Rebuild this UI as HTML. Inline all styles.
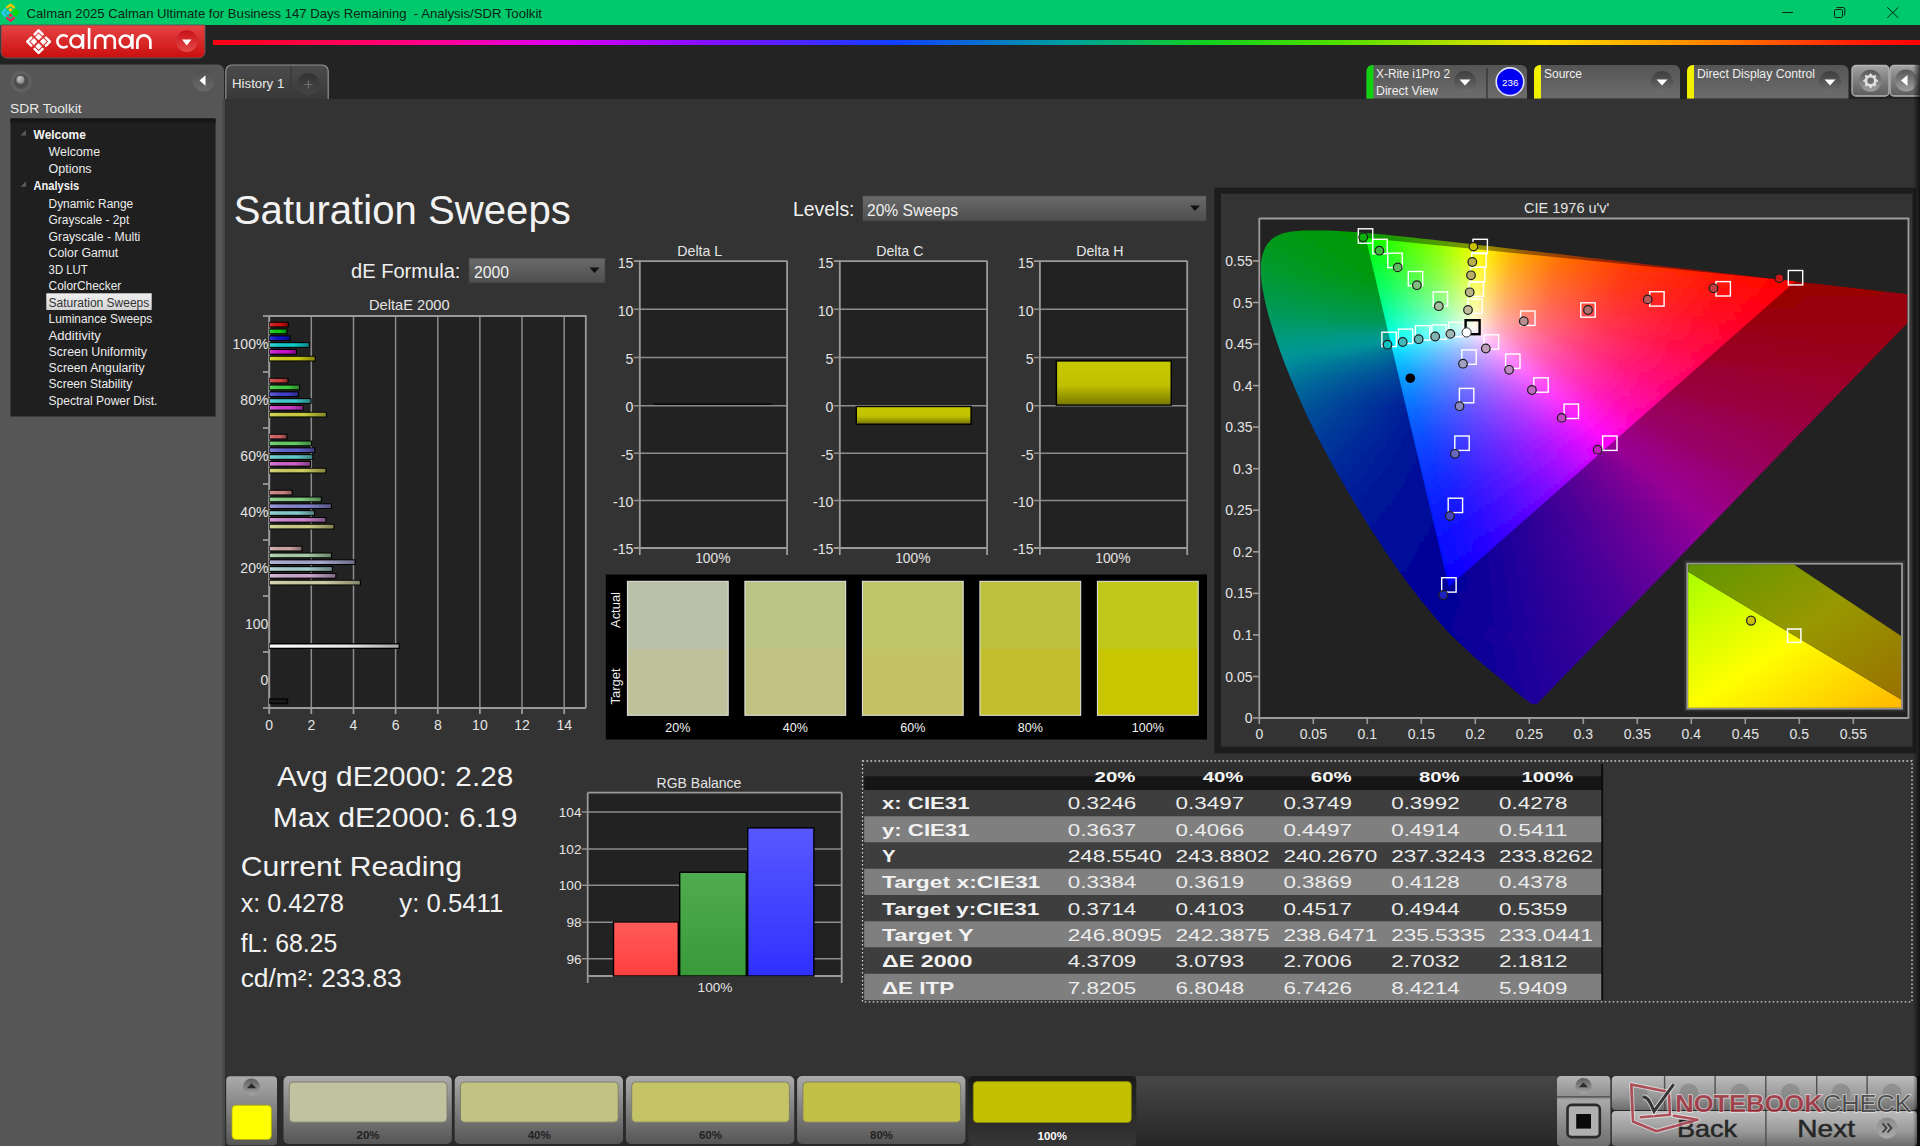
<!DOCTYPE html>
<html><head><meta charset="utf-8"><title>Calman</title>
<style>
*{margin:0;padding:0}
html,body{width:1920px;height:1146px;overflow:hidden;background:#232323}
svg{display:block;font-family:"Liberation Sans",sans-serif}
</style></head><body>
<svg width="1920" height="1146" viewBox="0 0 1920 1146">
<defs><linearGradient id="gRed" x1="0" y1="0" x2="0" y2="1"><stop offset="0" stop-color="#e54444"/><stop offset="1" stop-color="#cb0e0e"/></linearGradient><linearGradient id="gRedBtn" x1="0" y1="0" x2="0" y2="1"><stop offset="0" stop-color="#c81018"/><stop offset="1" stop-color="#e44a4a"/></linearGradient><linearGradient id="gRainbow" x1="0" y1="0" x2="1" y2="0"><stop offset="0" stop-color="#ff0010"/><stop offset="0.13" stop-color="#ff0090"/><stop offset="0.2" stop-color="#e000f0"/><stop offset="0.3" stop-color="#7a10ff"/><stop offset="0.4" stop-color="#1040ff"/><stop offset="0.5" stop-color="#00a0a0"/><stop offset="0.58" stop-color="#10d020"/><stop offset="0.66" stop-color="#50e000"/><stop offset="0.78" stop-color="#ffe000"/><stop offset="0.88" stop-color="#ff8000"/><stop offset="0.96" stop-color="#ff2000"/><stop offset="1" stop-color="#ff0000"/></linearGradient><radialGradient id="gKnobRing" cx="0.5" cy="0.5" r="0.5"><stop offset="0.55" stop-color="#4c4c4c"/><stop offset="0.8" stop-color="#646464"/><stop offset="1" stop-color="#5a5a5a"/></radialGradient><radialGradient id="gBall" cx="0.4" cy="0.35" r="0.6"><stop offset="0" stop-color="#c4c4c4"/><stop offset="1" stop-color="#8a8a8a"/></radialGradient><linearGradient id="gCircBtn" x1="0" y1="0" x2="0" y2="1"><stop offset="0" stop-color="#4e4e4e"/><stop offset="1" stop-color="#6a6a6a"/></linearGradient><linearGradient id="gTreeTop" x1="0" y1="0" x2="0" y2="1"><stop offset="0" stop-color="#111"/><stop offset="1" stop-color="#1f1f1f"/></linearGradient><linearGradient id="gSel" x1="0" y1="0" x2="0" y2="1"><stop offset="0" stop-color="#f0f0f0"/><stop offset="1" stop-color="#d4d4d4"/></linearGradient><linearGradient id="gTab" x1="0" y1="0" x2="0" y2="1"><stop offset="0" stop-color="#4c4c4c"/><stop offset="1" stop-color="#383838"/></linearGradient><linearGradient id="gPlus" x1="0" y1="0" x2="0" y2="1"><stop offset="0" stop-color="#333"/><stop offset="1" stop-color="#454545"/></linearGradient><linearGradient id="gCtl" x1="0" y1="0" x2="0" y2="1"><stop offset="0" stop-color="#555"/><stop offset="1" stop-color="#6c6c6c"/></linearGradient><linearGradient id="gDrop" x1="0" y1="0" x2="0" y2="1"><stop offset="0" stop-color="#3e3e3e"/><stop offset="1" stop-color="#6e6e6e"/></linearGradient><linearGradient id="gSq" x1="0" y1="0" x2="0" y2="1"><stop offset="0" stop-color="#a4a4a4"/><stop offset="0.45" stop-color="#808080"/><stop offset="1" stop-color="#5c5c5c"/></linearGradient><linearGradient id="gSqC" x1="0" y1="0" x2="0" y2="1"><stop offset="0" stop-color="#575757"/><stop offset="1" stop-color="#a0a0a0"/></linearGradient><linearGradient id="gDD" x1="0" y1="0" x2="0" y2="1"><stop offset="0" stop-color="#6a6a6a"/><stop offset="1" stop-color="#4e4e4e"/></linearGradient><linearGradient id="gBarH" x1="0" y1="0" x2="1" y2="0"><stop offset="0" stop-color="#fff" stop-opacity="0.18"/><stop offset="0.6" stop-color="#000" stop-opacity="0"/><stop offset="1" stop-color="#000" stop-opacity="0.35"/></linearGradient><linearGradient id="gWhiteBar" x1="0" y1="0" x2="1" y2="0"><stop offset="0" stop-color="#fff"/><stop offset="0.6" stop-color="#e8e8e8"/><stop offset="1" stop-color="#a8a8a8"/></linearGradient><linearGradient id="gYBar" x1="0" y1="0" x2="0" y2="1"><stop offset="0" stop-color="#c8c800"/><stop offset="0.55" stop-color="#c0c000"/><stop offset="1" stop-color="#7a7a00"/></linearGradient><linearGradient id="gRb" x1="0" y1="0" x2="0" y2="1"><stop offset="0" stop-color="#ff5a5a"/><stop offset="1" stop-color="#ff4040"/></linearGradient><linearGradient id="gGb" x1="0" y1="0" x2="0" y2="1"><stop offset="0" stop-color="#50ac50"/><stop offset="1" stop-color="#389a38"/></linearGradient><linearGradient id="gBb" x1="0" y1="0" x2="0" y2="1"><stop offset="0" stop-color="#5858ff"/><stop offset="1" stop-color="#3030ff"/></linearGradient><linearGradient id="o0" x1="0" x2="1"><stop offset="0.000" stop-color="#009913"/><stop offset="0.667" stop-color="#049900"/><stop offset="1.000" stop-color="#2e9900"/></linearGradient><linearGradient id="o1" x1="0" x2="1"><stop offset="0.000" stop-color="#009919"/><stop offset="0.531" stop-color="#059900"/><stop offset="0.918" stop-color="#5c9900"/><stop offset="1.000" stop-color="#749900"/></linearGradient><linearGradient id="o2" x1="0" x2="1"><stop offset="0.000" stop-color="#00991d"/><stop offset="0.460" stop-color="#069900"/><stop offset="0.746" stop-color="#5f9900"/><stop offset="0.889" stop-color="#999600"/><stop offset="1.000" stop-color="#996f00"/></linearGradient><linearGradient id="o3" x1="0" x2="1"><stop offset="0.000" stop-color="#009922"/><stop offset="0.403" stop-color="#059900"/><stop offset="0.623" stop-color="#5e9900"/><stop offset="0.740" stop-color="#999300"/><stop offset="0.896" stop-color="#995700"/><stop offset="1.000" stop-color="#994200"/></linearGradient><linearGradient id="o4" x1="0" x2="1"><stop offset="0.000" stop-color="#009926"/><stop offset="0.371" stop-color="#059900"/><stop offset="0.551" stop-color="#609900"/><stop offset="0.640" stop-color="#999300"/><stop offset="0.764" stop-color="#995800"/><stop offset="1.000" stop-color="#992a00"/></linearGradient><linearGradient id="o5" x1="0" x2="1"><stop offset="0.000" stop-color="#00992a"/><stop offset="0.340" stop-color="#059900"/><stop offset="0.476" stop-color="#5b9900"/><stop offset="0.553" stop-color="#999400"/><stop offset="0.650" stop-color="#995900"/><stop offset="0.835" stop-color="#992b00"/><stop offset="1.000" stop-color="#991800"/></linearGradient><linearGradient id="o6" x1="0" x2="1"><stop offset="0.000" stop-color="#00992f"/><stop offset="0.308" stop-color="#029900"/><stop offset="0.419" stop-color="#579900"/><stop offset="0.479" stop-color="#969900"/><stop offset="0.564" stop-color="#995900"/><stop offset="0.718" stop-color="#992a00"/><stop offset="1.000" stop-color="#990d00"/></linearGradient><linearGradient id="o7" x1="0" x2="1"><stop offset="0.000" stop-color="#009934"/><stop offset="0.292" stop-color="#049900"/><stop offset="0.385" stop-color="#5b9900"/><stop offset="0.431" stop-color="#979900"/><stop offset="0.492" stop-color="#995e00"/><stop offset="0.608" stop-color="#992e00"/><stop offset="0.877" stop-color="#990b00"/><stop offset="1.000" stop-color="#990500"/></linearGradient><linearGradient id="o8" x1="0" x2="1"><stop offset="0.000" stop-color="#009938"/><stop offset="0.224" stop-color="#00990b"/><stop offset="0.280" stop-color="#069900"/><stop offset="0.357" stop-color="#619900"/><stop offset="0.392" stop-color="#999900"/><stop offset="0.441" stop-color="#995e00"/><stop offset="0.531" stop-color="#992f00"/><stop offset="0.741" stop-color="#990d00"/><stop offset="1.000" stop-color="#990000"/></linearGradient><linearGradient id="o9" x1="0" x2="1"><stop offset="0.000" stop-color="#00993e"/><stop offset="0.199" stop-color="#009913"/><stop offset="0.263" stop-color="#009900"/><stop offset="0.327" stop-color="#5c9900"/><stop offset="0.359" stop-color="#999700"/><stop offset="0.397" stop-color="#995f00"/><stop offset="0.474" stop-color="#992e00"/><stop offset="0.654" stop-color="#990b00"/><stop offset="1.000" stop-color="#990003"/></linearGradient><linearGradient id="o10" x1="0" x2="1"><stop offset="0.000" stop-color="#009943"/><stop offset="0.179" stop-color="#00991c"/><stop offset="0.256" stop-color="#059900"/><stop offset="0.304" stop-color="#599900"/><stop offset="0.327" stop-color="#929900"/><stop offset="0.357" stop-color="#996500"/><stop offset="0.411" stop-color="#993500"/><stop offset="0.530" stop-color="#991100"/><stop offset="0.833" stop-color="#990002"/><stop offset="1.000" stop-color="#990006"/></linearGradient><linearGradient id="o11" x1="0" x2="1"><stop offset="0.000" stop-color="#009948"/><stop offset="0.179" stop-color="#009924"/><stop offset="0.262" stop-color="#029900"/><stop offset="0.304" stop-color="#559900"/><stop offset="0.327" stop-color="#989900"/><stop offset="0.357" stop-color="#995c00"/><stop offset="0.411" stop-color="#992d00"/><stop offset="0.536" stop-color="#990b00"/><stop offset="0.851" stop-color="#990005"/><stop offset="1.000" stop-color="#990008"/></linearGradient><linearGradient id="o12" x1="0" x2="1"><stop offset="0.000" stop-color="#00994e"/><stop offset="0.179" stop-color="#00992d"/><stop offset="0.268" stop-color="#009900"/><stop offset="0.298" stop-color="#3f9900"/><stop offset="0.327" stop-color="#999200"/><stop offset="0.351" stop-color="#995a00"/><stop offset="0.399" stop-color="#992a00"/><stop offset="0.512" stop-color="#990900"/><stop offset="0.827" stop-color="#990007"/><stop offset="1.000" stop-color="#99000a"/></linearGradient><linearGradient id="o13" x1="0" x2="1"><stop offset="0.000" stop-color="#009954"/><stop offset="0.186" stop-color="#009935"/><stop offset="0.281" stop-color="#039900"/><stop offset="0.305" stop-color="#489900"/><stop offset="0.323" stop-color="#919900"/><stop offset="0.341" stop-color="#996300"/><stop offset="0.371" stop-color="#993500"/><stop offset="0.437" stop-color="#991200"/><stop offset="0.605" stop-color="#990002"/><stop offset="1.000" stop-color="#99000b"/></linearGradient><linearGradient id="o14" x1="0" x2="1"><stop offset="0.000" stop-color="#00995a"/><stop offset="0.192" stop-color="#009940"/><stop offset="0.263" stop-color="#009917"/><stop offset="0.287" stop-color="#009900"/><stop offset="0.299" stop-color="#239900"/><stop offset="0.323" stop-color="#999600"/><stop offset="0.335" stop-color="#996200"/><stop offset="0.359" stop-color="#993300"/><stop offset="0.413" stop-color="#990f00"/><stop offset="0.545" stop-color="#990003"/><stop offset="1.000" stop-color="#99000d"/></linearGradient><linearGradient id="o15" x1="0" x2="1"><stop offset="0.000" stop-color="#009961"/><stop offset="0.210" stop-color="#009949"/><stop offset="0.269" stop-color="#009926"/><stop offset="0.299" stop-color="#069900"/><stop offset="0.311" stop-color="#4e9900"/><stop offset="0.317" stop-color="#7d9900"/><stop offset="0.323" stop-color="#998100"/><stop offset="0.335" stop-color="#994900"/><stop offset="0.359" stop-color="#991f00"/><stop offset="0.419" stop-color="#990300"/><stop offset="1.000" stop-color="#99000f"/></linearGradient><linearGradient id="o16" x1="0" x2="1"><stop offset="0.000" stop-color="#009968"/><stop offset="0.236" stop-color="#009955"/><stop offset="0.285" stop-color="#009937"/><stop offset="0.309" stop-color="#009900"/><stop offset="0.315" stop-color="#429900"/><stop offset="0.321" stop-color="#998c00"/><stop offset="0.327" stop-color="#994d00"/><stop offset="0.333" stop-color="#993000"/><stop offset="0.352" stop-color="#990e00"/><stop offset="0.394" stop-color="#990003"/><stop offset="0.867" stop-color="#990010"/><stop offset="1.000" stop-color="#990011"/></linearGradient><linearGradient id="o17" x1="0" x2="1"><stop offset="0.000" stop-color="#00996f"/><stop offset="0.305" stop-color="#009974"/><stop offset="0.311" stop-color="#009978"/><stop offset="0.317" stop-color="#008f99"/><stop offset="0.323" stop-color="#99001b"/><stop offset="0.512" stop-color="#990013"/><stop offset="1.000" stop-color="#990013"/></linearGradient><linearGradient id="o18" x1="0" x2="1"><stop offset="0.000" stop-color="#009977"/><stop offset="0.222" stop-color="#00998a"/><stop offset="0.259" stop-color="#009699"/><stop offset="0.290" stop-color="#006d99"/><stop offset="0.302" stop-color="#004a99"/><stop offset="0.315" stop-color="#000e99"/><stop offset="0.321" stop-color="#1d0099"/><stop offset="0.327" stop-color="#6e0099"/><stop offset="0.333" stop-color="#99007e"/><stop offset="0.340" stop-color="#99005c"/><stop offset="0.358" stop-color="#990038"/><stop offset="0.420" stop-color="#990021"/><stop offset="1.000" stop-color="#990015"/></linearGradient><linearGradient id="o19" x1="0" x2="1"><stop offset="0.000" stop-color="#00997f"/><stop offset="0.188" stop-color="#009997"/><stop offset="0.256" stop-color="#007499"/><stop offset="0.294" stop-color="#003f99"/><stop offset="0.319" stop-color="#000199"/><stop offset="0.325" stop-color="#1d0099"/><stop offset="0.344" stop-color="#960099"/><stop offset="0.356" stop-color="#990069"/><stop offset="0.381" stop-color="#990044"/><stop offset="0.456" stop-color="#990028"/><stop offset="0.919" stop-color="#990017"/><stop offset="1.000" stop-color="#990017"/></linearGradient><linearGradient id="o20" x1="0" x2="1"><stop offset="0.000" stop-color="#009988"/><stop offset="0.152" stop-color="#009299"/><stop offset="0.241" stop-color="#006899"/><stop offset="0.291" stop-color="#002c99"/><stop offset="0.316" stop-color="#000199"/><stop offset="0.329" stop-color="#2b0099"/><stop offset="0.354" stop-color="#970099"/><stop offset="0.373" stop-color="#990069"/><stop offset="0.411" stop-color="#990043"/><stop offset="0.525" stop-color="#990028"/><stop offset="1.000" stop-color="#990019"/></linearGradient><linearGradient id="o21" x1="0" x2="1"><stop offset="0.000" stop-color="#009991"/><stop offset="0.115" stop-color="#008d99"/><stop offset="0.224" stop-color="#006199"/><stop offset="0.288" stop-color="#002399"/><stop offset="0.321" stop-color="#050099"/><stop offset="0.365" stop-color="#920099"/><stop offset="0.397" stop-color="#990063"/><stop offset="0.462" stop-color="#99003d"/><stop offset="0.667" stop-color="#990023"/><stop offset="1.000" stop-color="#99001b"/></linearGradient><linearGradient id="o22" x1="0" x2="1"><stop offset="0.000" stop-color="#009899"/><stop offset="0.175" stop-color="#006d99"/><stop offset="0.266" stop-color="#003399"/><stop offset="0.318" stop-color="#000099"/><stop offset="0.357" stop-color="#5b0099"/><stop offset="0.383" stop-color="#990097"/><stop offset="0.416" stop-color="#990067"/><stop offset="0.487" stop-color="#990041"/><stop offset="0.708" stop-color="#990026"/><stop offset="1.000" stop-color="#99001d"/></linearGradient><linearGradient id="o23" x1="0" x2="1"><stop offset="0.000" stop-color="#008f99"/><stop offset="0.178" stop-color="#006099"/><stop offset="0.276" stop-color="#002199"/><stop offset="0.322" stop-color="#030099"/><stop offset="0.395" stop-color="#970099"/><stop offset="0.441" stop-color="#990063"/><stop offset="0.539" stop-color="#99003d"/><stop offset="0.855" stop-color="#990023"/><stop offset="1.000" stop-color="#990020"/></linearGradient><linearGradient id="o24" x1="0" x2="1"><stop offset="0.000" stop-color="#008699"/><stop offset="0.180" stop-color="#005499"/><stop offset="0.320" stop-color="#020099"/><stop offset="0.407" stop-color="#970099"/><stop offset="0.460" stop-color="#990064"/><stop offset="0.573" stop-color="#99003e"/><stop offset="0.940" stop-color="#990024"/><stop offset="1.000" stop-color="#990022"/></linearGradient><linearGradient id="o25" x1="0" x2="1"><stop offset="0.000" stop-color="#007d99"/><stop offset="0.182" stop-color="#004a99"/><stop offset="0.318" stop-color="#000099"/><stop offset="0.426" stop-color="#990094"/><stop offset="0.486" stop-color="#990062"/><stop offset="0.622" stop-color="#99003d"/><stop offset="1.000" stop-color="#990025"/></linearGradient><linearGradient id="o26" x1="0" x2="1"><stop offset="0.000" stop-color="#007599"/><stop offset="0.185" stop-color="#004199"/><stop offset="0.315" stop-color="#000099"/><stop offset="0.438" stop-color="#990095"/><stop offset="0.507" stop-color="#990062"/><stop offset="0.664" stop-color="#99003c"/><stop offset="1.000" stop-color="#990027"/></linearGradient><linearGradient id="o27" x1="0" x2="1"><stop offset="0.000" stop-color="#006e99"/><stop offset="0.194" stop-color="#003699"/><stop offset="0.319" stop-color="#020099"/><stop offset="0.451" stop-color="#990097"/><stop offset="0.521" stop-color="#990067"/><stop offset="0.681" stop-color="#990040"/><stop offset="1.000" stop-color="#99002a"/></linearGradient><linearGradient id="o28" x1="0" x2="1"><stop offset="0.000" stop-color="#006799"/><stop offset="0.206" stop-color="#002c99"/><stop offset="0.319" stop-color="#000099"/><stop offset="0.468" stop-color="#990097"/><stop offset="0.546" stop-color="#990067"/><stop offset="0.723" stop-color="#990040"/><stop offset="1.000" stop-color="#99002d"/></linearGradient><linearGradient id="o29" x1="0" x2="1"><stop offset="0.000" stop-color="#006199"/><stop offset="0.214" stop-color="#002399"/><stop offset="0.321" stop-color="#050099"/><stop offset="0.479" stop-color="#990099"/><stop offset="0.564" stop-color="#990068"/><stop offset="0.757" stop-color="#990040"/><stop offset="1.000" stop-color="#99002f"/></linearGradient><linearGradient id="o30" x1="0" x2="1"><stop offset="0.000" stop-color="#005b99"/><stop offset="0.234" stop-color="#001899"/><stop offset="0.321" stop-color="#040099"/><stop offset="0.504" stop-color="#990093"/><stop offset="0.606" stop-color="#990063"/><stop offset="0.839" stop-color="#99003d"/><stop offset="1.000" stop-color="#990033"/></linearGradient><linearGradient id="o31" x1="0" x2="1"><stop offset="0.000" stop-color="#005599"/><stop offset="0.319" stop-color="#030099"/><stop offset="0.519" stop-color="#990094"/><stop offset="0.630" stop-color="#990063"/><stop offset="0.889" stop-color="#99003d"/><stop offset="1.000" stop-color="#990036"/></linearGradient><linearGradient id="o32" x1="0" x2="1"><stop offset="0.000" stop-color="#005099"/><stop offset="0.316" stop-color="#020099"/><stop offset="0.534" stop-color="#990094"/><stop offset="0.654" stop-color="#990064"/><stop offset="0.932" stop-color="#99003d"/><stop offset="1.000" stop-color="#990039"/></linearGradient><linearGradient id="o33" x1="0" x2="1"><stop offset="0.000" stop-color="#004b99"/><stop offset="0.321" stop-color="#050099"/><stop offset="0.550" stop-color="#990096"/><stop offset="0.679" stop-color="#990064"/><stop offset="0.977" stop-color="#99003e"/><stop offset="1.000" stop-color="#99003c"/></linearGradient><linearGradient id="o34" x1="0" x2="1"><stop offset="0.000" stop-color="#004699"/><stop offset="0.318" stop-color="#040099"/><stop offset="0.566" stop-color="#990096"/><stop offset="0.705" stop-color="#990065"/><stop offset="1.000" stop-color="#990040"/></linearGradient><linearGradient id="o35" x1="0" x2="1"><stop offset="0.000" stop-color="#004199"/><stop offset="0.315" stop-color="#030099"/><stop offset="0.583" stop-color="#990096"/><stop offset="0.732" stop-color="#990065"/><stop offset="1.000" stop-color="#990043"/></linearGradient><linearGradient id="o36" x1="0" x2="1"><stop offset="0.000" stop-color="#003d99"/><stop offset="0.315" stop-color="#030099"/><stop offset="0.605" stop-color="#990097"/><stop offset="0.766" stop-color="#990065"/><stop offset="1.000" stop-color="#990047"/></linearGradient><linearGradient id="o37" x1="0" x2="1"><stop offset="0.000" stop-color="#003999"/><stop offset="0.311" stop-color="#020099"/><stop offset="0.623" stop-color="#990097"/><stop offset="0.795" stop-color="#990065"/><stop offset="1.000" stop-color="#99004b"/></linearGradient><linearGradient id="o38" x1="0" x2="1"><stop offset="0.000" stop-color="#003599"/><stop offset="0.308" stop-color="#020099"/><stop offset="0.650" stop-color="#990093"/><stop offset="0.842" stop-color="#990062"/><stop offset="1.000" stop-color="#99004f"/></linearGradient><linearGradient id="o39" x1="0" x2="1"><stop offset="0.000" stop-color="#003299"/><stop offset="0.314" stop-color="#040099"/><stop offset="0.669" stop-color="#990094"/><stop offset="0.873" stop-color="#990063"/><stop offset="1.000" stop-color="#990053"/></linearGradient><linearGradient id="o40" x1="0" x2="1"><stop offset="0.000" stop-color="#002e99"/><stop offset="0.313" stop-color="#050099"/><stop offset="0.696" stop-color="#990093"/><stop offset="0.922" stop-color="#990061"/><stop offset="1.000" stop-color="#990058"/></linearGradient><linearGradient id="o41" x1="0" x2="1"><stop offset="0.000" stop-color="#002b99"/><stop offset="0.310" stop-color="#040099"/><stop offset="0.717" stop-color="#990094"/><stop offset="0.956" stop-color="#990062"/><stop offset="1.000" stop-color="#99005c"/></linearGradient><linearGradient id="o42" x1="0" x2="1"><stop offset="0.000" stop-color="#002899"/><stop offset="0.306" stop-color="#040099"/><stop offset="0.739" stop-color="#990094"/><stop offset="0.991" stop-color="#990062"/><stop offset="1.000" stop-color="#990061"/></linearGradient><linearGradient id="o43" x1="0" x2="1"><stop offset="0.000" stop-color="#002499"/><stop offset="0.315" stop-color="#060099"/><stop offset="0.769" stop-color="#990093"/><stop offset="1.000" stop-color="#990066"/></linearGradient><linearGradient id="o44" x1="0" x2="1"><stop offset="0.000" stop-color="#002299"/><stop offset="0.311" stop-color="#060099"/><stop offset="0.792" stop-color="#990094"/><stop offset="1.000" stop-color="#99006b"/></linearGradient><linearGradient id="o45" x1="0" x2="1"><stop offset="0.000" stop-color="#001f99"/><stop offset="0.308" stop-color="#060099"/><stop offset="0.808" stop-color="#990096"/><stop offset="1.000" stop-color="#990070"/></linearGradient><linearGradient id="o46" x1="0" x2="1"><stop offset="0.000" stop-color="#001d99"/><stop offset="0.307" stop-color="#050099"/><stop offset="0.851" stop-color="#990093"/><stop offset="1.000" stop-color="#990077"/></linearGradient><linearGradient id="o47" x1="0" x2="1"><stop offset="0.000" stop-color="#001a99"/><stop offset="0.303" stop-color="#060099"/><stop offset="0.869" stop-color="#990095"/><stop offset="1.000" stop-color="#99007c"/></linearGradient><linearGradient id="o48" x1="0" x2="1"><stop offset="0.000" stop-color="#001899"/><stop offset="0.299" stop-color="#050099"/><stop offset="0.907" stop-color="#990093"/><stop offset="1.000" stop-color="#990081"/></linearGradient><linearGradient id="o49" x1="0" x2="1"><stop offset="0.000" stop-color="#001699"/><stop offset="0.298" stop-color="#050099"/><stop offset="0.936" stop-color="#990095"/><stop offset="1.000" stop-color="#990089"/></linearGradient><linearGradient id="o50" x1="0" x2="1"><stop offset="0.000" stop-color="#001499"/><stop offset="0.293" stop-color="#050099"/><stop offset="0.967" stop-color="#990095"/><stop offset="1.000" stop-color="#99008f"/></linearGradient><linearGradient id="o51" x1="0" x2="1"><stop offset="0.000" stop-color="#001299"/><stop offset="0.292" stop-color="#050099"/><stop offset="1.000" stop-color="#990097"/></linearGradient><linearGradient id="o52" x1="0" x2="1"><stop offset="0.000" stop-color="#001099"/><stop offset="0.287" stop-color="#050099"/><stop offset="1.000" stop-color="#950099"/></linearGradient><linearGradient id="o53" x1="0" x2="1"><stop offset="0.000" stop-color="#000e99"/><stop offset="0.282" stop-color="#050099"/><stop offset="1.000" stop-color="#8f0099"/></linearGradient><linearGradient id="o54" x1="0" x2="1"><stop offset="0.000" stop-color="#000d99"/><stop offset="0.280" stop-color="#050099"/><stop offset="1.000" stop-color="#870099"/></linearGradient><linearGradient id="o55" x1="0" x2="1"><stop offset="0.000" stop-color="#000b99"/><stop offset="0.287" stop-color="#070099"/><stop offset="1.000" stop-color="#820099"/></linearGradient><linearGradient id="o56" x1="0" x2="1"><stop offset="0.000" stop-color="#000a99"/><stop offset="0.286" stop-color="#070099"/><stop offset="1.000" stop-color="#7b0099"/></linearGradient><linearGradient id="o57" x1="0" x2="1"><stop offset="0.000" stop-color="#000999"/><stop offset="0.280" stop-color="#070099"/><stop offset="1.000" stop-color="#760099"/></linearGradient><linearGradient id="o58" x1="0" x2="1"><stop offset="0.000" stop-color="#000799"/><stop offset="0.278" stop-color="#070099"/><stop offset="1.000" stop-color="#6f0099"/></linearGradient><linearGradient id="o59" x1="0" x2="1"><stop offset="0.000" stop-color="#000699"/><stop offset="0.257" stop-color="#060099"/><stop offset="1.000" stop-color="#6b0099"/></linearGradient><linearGradient id="o60" x1="0" x2="1"><stop offset="0.000" stop-color="#000599"/><stop offset="0.265" stop-color="#070099"/><stop offset="1.000" stop-color="#670099"/></linearGradient><linearGradient id="o61" x1="0" x2="1"><stop offset="0.000" stop-color="#000499"/><stop offset="0.262" stop-color="#080099"/><stop offset="1.000" stop-color="#610099"/></linearGradient><linearGradient id="o62" x1="0" x2="1"><stop offset="0.000" stop-color="#000399"/><stop offset="0.258" stop-color="#080099"/><stop offset="1.000" stop-color="#5c0099"/></linearGradient><linearGradient id="o63" x1="0" x2="1"><stop offset="0.000" stop-color="#000399"/><stop offset="0.250" stop-color="#080099"/><stop offset="1.000" stop-color="#590099"/></linearGradient><linearGradient id="o64" x1="0" x2="1"><stop offset="0.000" stop-color="#000299"/><stop offset="0.246" stop-color="#090099"/><stop offset="1.000" stop-color="#540099"/></linearGradient><linearGradient id="o65" x1="0" x2="1"><stop offset="0.000" stop-color="#000199"/><stop offset="0.278" stop-color="#0c0099"/><stop offset="1.000" stop-color="#4f0099"/></linearGradient><linearGradient id="o66" x1="0" x2="1"><stop offset="0.000" stop-color="#000199"/><stop offset="0.308" stop-color="#100099"/><stop offset="1.000" stop-color="#4c0099"/></linearGradient><linearGradient id="o67" x1="0" x2="1"><stop offset="0.000" stop-color="#000099"/><stop offset="0.429" stop-color="#1a0099"/><stop offset="1.000" stop-color="#480099"/></linearGradient><linearGradient id="o68" x1="0" x2="1"><stop offset="0.000" stop-color="#000099"/><stop offset="1.000" stop-color="#440099"/></linearGradient><linearGradient id="o69" x1="0" x2="1"><stop offset="0.000" stop-color="#000099"/><stop offset="1.000" stop-color="#410099"/></linearGradient><linearGradient id="o70" x1="0" x2="1"><stop offset="0.000" stop-color="#000099"/><stop offset="1.000" stop-color="#3d0099"/></linearGradient><linearGradient id="o71" x1="0" x2="1"><stop offset="0.000" stop-color="#030099"/><stop offset="1.000" stop-color="#3a0099"/></linearGradient><linearGradient id="o72" x1="0" x2="1"><stop offset="0.000" stop-color="#050099"/><stop offset="1.000" stop-color="#370099"/></linearGradient><linearGradient id="o73" x1="0" x2="1"><stop offset="0.000" stop-color="#070099"/><stop offset="1.000" stop-color="#340099"/></linearGradient><linearGradient id="o74" x1="0" x2="1"><stop offset="0.000" stop-color="#0a0099"/><stop offset="1.000" stop-color="#310099"/></linearGradient><linearGradient id="o75" x1="0" x2="1"><stop offset="0.000" stop-color="#0c0099"/><stop offset="1.000" stop-color="#2e0099"/></linearGradient><linearGradient id="o76" x1="0" x2="1"><stop offset="0.000" stop-color="#0e0099"/><stop offset="1.000" stop-color="#2b0099"/></linearGradient><linearGradient id="o77" x1="0" x2="1"><stop offset="0.000" stop-color="#100099"/><stop offset="1.000" stop-color="#290099"/></linearGradient><linearGradient id="o78" x1="0" x2="1"><stop offset="0.000" stop-color="#130099"/><stop offset="1.000" stop-color="#270099"/></linearGradient><linearGradient id="o79" x1="0" x2="1"><stop offset="0.000" stop-color="#150099"/><stop offset="1.000" stop-color="#240099"/></linearGradient><linearGradient id="o80" x1="0" x2="1"><stop offset="0.000" stop-color="#170099"/><stop offset="1.000" stop-color="#210099"/></linearGradient><linearGradient id="n0" x1="0" x2="1"><stop offset="0.000" stop-color="#00ff00"/><stop offset="0.357" stop-color="#11ff00"/><stop offset="1.000" stop-color="#43ff00"/></linearGradient><linearGradient id="n1" x1="0" x2="1"><stop offset="0.000" stop-color="#00ff01"/><stop offset="0.148" stop-color="#0aff00"/><stop offset="0.963" stop-color="#8eff00"/><stop offset="1.000" stop-color="#95ff00"/></linearGradient><linearGradient id="n2" x1="0" x2="1"><stop offset="0.000" stop-color="#00ff08"/><stop offset="0.100" stop-color="#09ff06"/><stop offset="0.625" stop-color="#87ff00"/><stop offset="1.000" stop-color="#fcff00"/></linearGradient><linearGradient id="n3" x1="0" x2="1"><stop offset="0.000" stop-color="#00ff10"/><stop offset="0.075" stop-color="#07ff0e"/><stop offset="0.472" stop-color="#86ff02"/><stop offset="0.755" stop-color="#fdff00"/><stop offset="0.981" stop-color="#ffaf00"/><stop offset="1.000" stop-color="#ffaa00"/></linearGradient><linearGradient id="n4" x1="0" x2="1"><stop offset="0.000" stop-color="#00ff17"/><stop offset="0.061" stop-color="#08ff15"/><stop offset="0.379" stop-color="#88ff0b"/><stop offset="0.606" stop-color="#fffd01"/><stop offset="0.773" stop-color="#ffb100"/><stop offset="1.000" stop-color="#ff7400"/></linearGradient><linearGradient id="n5" x1="0" x2="1"><stop offset="0.000" stop-color="#00ff1e"/><stop offset="0.051" stop-color="#08ff1d"/><stop offset="0.321" stop-color="#8bff13"/><stop offset="0.500" stop-color="#fcff0b"/><stop offset="0.654" stop-color="#ffae02"/><stop offset="0.872" stop-color="#ff6c00"/><stop offset="1.000" stop-color="#ff5300"/></linearGradient><linearGradient id="n6" x1="0" x2="1"><stop offset="0.000" stop-color="#00ff26"/><stop offset="0.044" stop-color="#08ff25"/><stop offset="0.264" stop-color="#85ff1d"/><stop offset="0.429" stop-color="#fffe15"/><stop offset="0.538" stop-color="#ffb60b"/><stop offset="0.714" stop-color="#ff7201"/><stop offset="1.000" stop-color="#ff3900"/></linearGradient><linearGradient id="n7" x1="0" x2="1"><stop offset="0.000" stop-color="#00ff2e"/><stop offset="0.038" stop-color="#08ff2d"/><stop offset="0.231" stop-color="#87ff26"/><stop offset="0.365" stop-color="#fbff20"/><stop offset="0.481" stop-color="#ffad11"/><stop offset="0.635" stop-color="#ff6d06"/><stop offset="0.885" stop-color="#ff3600"/><stop offset="1.000" stop-color="#ff2600"/></linearGradient><linearGradient id="n8" x1="0" x2="1"><stop offset="0.000" stop-color="#00ff36"/><stop offset="0.034" stop-color="#08ff35"/><stop offset="0.207" stop-color="#89ff2f"/><stop offset="0.328" stop-color="#ffff2b"/><stop offset="0.414" stop-color="#ffb51b"/><stop offset="0.543" stop-color="#ff740e"/><stop offset="0.759" stop-color="#ff3a02"/><stop offset="1.000" stop-color="#ff1800"/></linearGradient><linearGradient id="n9" x1="0" x2="1"><stop offset="0.000" stop-color="#00ff3e"/><stop offset="0.031" stop-color="#09ff3d"/><stop offset="0.186" stop-color="#8cff39"/><stop offset="0.295" stop-color="#fffa34"/><stop offset="0.372" stop-color="#ffb123"/><stop offset="0.488" stop-color="#ff7113"/><stop offset="0.682" stop-color="#ff3806"/><stop offset="1.000" stop-color="#ff0c00"/></linearGradient><linearGradient id="n10" x1="0" x2="1"><stop offset="0.000" stop-color="#00ff46"/><stop offset="0.028" stop-color="#09ff46"/><stop offset="0.162" stop-color="#86ff43"/><stop offset="0.261" stop-color="#ffff41"/><stop offset="0.331" stop-color="#ffb42c"/><stop offset="0.437" stop-color="#ff721a"/><stop offset="0.606" stop-color="#ff3a0b"/><stop offset="0.908" stop-color="#ff0b00"/><stop offset="1.000" stop-color="#ff0200"/></linearGradient><linearGradient id="n11" x1="0" x2="1"><stop offset="0.000" stop-color="#00ff4f"/><stop offset="0.028" stop-color="#09ff4f"/><stop offset="0.159" stop-color="#88ff4e"/><stop offset="0.255" stop-color="#fffb4b"/><stop offset="0.324" stop-color="#ffb034"/><stop offset="0.428" stop-color="#ff6f20"/><stop offset="0.600" stop-color="#ff360f"/><stop offset="0.903" stop-color="#ff0800"/><stop offset="1.000" stop-color="#ff0000"/></linearGradient><linearGradient id="n12" x1="0" x2="1"><stop offset="0.000" stop-color="#00ff58"/><stop offset="0.028" stop-color="#09ff58"/><stop offset="0.160" stop-color="#8bff58"/><stop offset="0.250" stop-color="#feff58"/><stop offset="0.319" stop-color="#ffb33e"/><stop offset="0.424" stop-color="#ff7027"/><stop offset="0.590" stop-color="#ff3814"/><stop offset="0.889" stop-color="#ff0904"/><stop offset="1.000" stop-color="#ff0000"/></linearGradient><linearGradient id="n13" x1="0" x2="1"><stop offset="0.000" stop-color="#00ff61"/><stop offset="0.028" stop-color="#09ff61"/><stop offset="0.160" stop-color="#8dff63"/><stop offset="0.250" stop-color="#fffc63"/><stop offset="0.319" stop-color="#ffaf46"/><stop offset="0.424" stop-color="#ff6e2d"/><stop offset="0.590" stop-color="#ff3618"/><stop offset="0.889" stop-color="#ff0806"/><stop offset="1.000" stop-color="#ff0003"/></linearGradient><linearGradient id="n14" x1="0" x2="1"><stop offset="0.000" stop-color="#00ff6a"/><stop offset="0.028" stop-color="#0aff6b"/><stop offset="0.154" stop-color="#87ff6e"/><stop offset="0.245" stop-color="#fdff71"/><stop offset="0.315" stop-color="#ffb251"/><stop offset="0.413" stop-color="#ff7236"/><stop offset="0.573" stop-color="#ff391e"/><stop offset="0.860" stop-color="#ff0a0b"/><stop offset="1.000" stop-color="#ff0005"/></linearGradient><linearGradient id="n15" x1="0" x2="1"><stop offset="0.000" stop-color="#00ff74"/><stop offset="0.028" stop-color="#0aff75"/><stop offset="0.156" stop-color="#89ff7a"/><stop offset="0.248" stop-color="#fffc7d"/><stop offset="0.312" stop-color="#ffb45c"/><stop offset="0.411" stop-color="#ff723e"/><stop offset="0.574" stop-color="#ff3924"/><stop offset="0.865" stop-color="#ff0a0e"/><stop offset="1.000" stop-color="#ff0008"/></linearGradient><linearGradient id="n16" x1="0" x2="1"><stop offset="0.000" stop-color="#00ff7e"/><stop offset="0.022" stop-color="#04ff7f"/><stop offset="0.151" stop-color="#83ff85"/><stop offset="0.245" stop-color="#fcff8b"/><stop offset="0.324" stop-color="#ffaa61"/><stop offset="0.432" stop-color="#ff6941"/><stop offset="0.604" stop-color="#ff3226"/><stop offset="0.921" stop-color="#ff040f"/><stop offset="1.000" stop-color="#ff000b"/></linearGradient><linearGradient id="n17" x1="0" x2="1"><stop offset="0.000" stop-color="#00ff88"/><stop offset="0.022" stop-color="#04ff89"/><stop offset="0.153" stop-color="#86ff91"/><stop offset="0.248" stop-color="#fffd98"/><stop offset="0.314" stop-color="#ffb370"/><stop offset="0.416" stop-color="#ff704c"/><stop offset="0.577" stop-color="#ff392f"/><stop offset="0.869" stop-color="#ff0915"/><stop offset="1.000" stop-color="#ff000f"/></linearGradient><linearGradient id="n18" x1="0" x2="1"><stop offset="0.000" stop-color="#00ff92"/><stop offset="0.022" stop-color="#04ff94"/><stop offset="0.154" stop-color="#88ff9e"/><stop offset="0.243" stop-color="#fbffa7"/><stop offset="0.324" stop-color="#ffa975"/><stop offset="0.426" stop-color="#ff6a51"/><stop offset="0.596" stop-color="#ff3331"/><stop offset="0.904" stop-color="#ff0517"/><stop offset="1.000" stop-color="#ff0012"/></linearGradient><linearGradient id="n19" x1="0" x2="1"><stop offset="0.000" stop-color="#00ff9d"/><stop offset="0.022" stop-color="#04ff9f"/><stop offset="0.149" stop-color="#82ffaa"/><stop offset="0.246" stop-color="#fffeb5"/><stop offset="0.313" stop-color="#ffb285"/><stop offset="0.410" stop-color="#ff725e"/><stop offset="0.567" stop-color="#ff3a3b"/><stop offset="0.851" stop-color="#ff0b1e"/><stop offset="1.000" stop-color="#ff0015"/></linearGradient><linearGradient id="n20" x1="0" x2="1"><stop offset="0.000" stop-color="#00ffa8"/><stop offset="0.023" stop-color="#05ffaa"/><stop offset="0.152" stop-color="#84ffb7"/><stop offset="0.242" stop-color="#faffc4"/><stop offset="0.326" stop-color="#ffa88a"/><stop offset="0.432" stop-color="#ff6860"/><stop offset="0.606" stop-color="#ff313b"/><stop offset="0.924" stop-color="#ff031d"/><stop offset="1.000" stop-color="#ff0018"/></linearGradient><linearGradient id="n21" x1="0" x2="1"><stop offset="0.000" stop-color="#00ffb3"/><stop offset="0.023" stop-color="#05ffb6"/><stop offset="0.154" stop-color="#87ffc5"/><stop offset="0.246" stop-color="#ffffd3"/><stop offset="0.308" stop-color="#ffb8a1"/><stop offset="0.400" stop-color="#ff7873"/><stop offset="0.554" stop-color="#ff3e4a"/><stop offset="0.823" stop-color="#ff0e28"/><stop offset="1.000" stop-color="#ff001c"/></linearGradient><linearGradient id="n22" x1="0" x2="1"><stop offset="0.000" stop-color="#00ffbf"/><stop offset="0.023" stop-color="#05ffc2"/><stop offset="0.148" stop-color="#80ffd2"/><stop offset="0.250" stop-color="#fffadf"/><stop offset="0.312" stop-color="#ffb4aa"/><stop offset="0.414" stop-color="#ff7177"/><stop offset="0.578" stop-color="#ff384c"/><stop offset="0.867" stop-color="#ff0929"/><stop offset="1.000" stop-color="#ff0020"/></linearGradient><linearGradient id="n23" x1="0" x2="1"><stop offset="0.000" stop-color="#00ffcb"/><stop offset="0.024" stop-color="#05ffce"/><stop offset="0.151" stop-color="#83ffe1"/><stop offset="0.246" stop-color="#fefff3"/><stop offset="0.317" stop-color="#ffafb3"/><stop offset="0.421" stop-color="#ff6e7e"/><stop offset="0.587" stop-color="#ff3651"/><stop offset="0.889" stop-color="#ff072c"/><stop offset="1.000" stop-color="#ff0024"/></linearGradient><linearGradient id="n24" x1="0" x2="1"><stop offset="0.000" stop-color="#00ffd7"/><stop offset="0.032" stop-color="#0affdc"/><stop offset="0.160" stop-color="#8bfff1"/><stop offset="0.248" stop-color="#fbfaff"/><stop offset="0.328" stop-color="#ffa7b9"/><stop offset="0.432" stop-color="#ff6883"/><stop offset="0.608" stop-color="#ff3154"/><stop offset="0.928" stop-color="#ff032c"/><stop offset="1.000" stop-color="#ff0027"/></linearGradient><linearGradient id="n25" x1="0" x2="1"><stop offset="0.000" stop-color="#00ffe4"/><stop offset="0.024" stop-color="#03ffe8"/><stop offset="0.154" stop-color="#85ffff"/><stop offset="0.268" stop-color="#ffe3fc"/><stop offset="0.341" stop-color="#ff9dbc"/><stop offset="0.455" stop-color="#ff5f84"/><stop offset="0.642" stop-color="#ff2a54"/><stop offset="0.967" stop-color="#ff002e"/><stop offset="1.000" stop-color="#ff002b"/></linearGradient><linearGradient id="n26" x1="0" x2="1"><stop offset="0.000" stop-color="#00fff1"/><stop offset="0.025" stop-color="#03fff5"/><stop offset="0.132" stop-color="#67f5ff"/><stop offset="0.281" stop-color="#ffd5fe"/><stop offset="0.364" stop-color="#ff8eba"/><stop offset="0.488" stop-color="#ff5382"/><stop offset="0.702" stop-color="#ff1f50"/><stop offset="1.000" stop-color="#ff002f"/></linearGradient><linearGradient id="n27" x1="0" x2="1"><stop offset="0.000" stop-color="#00ffff"/><stop offset="0.025" stop-color="#03fbff"/><stop offset="0.261" stop-color="#dbcdff"/><stop offset="0.294" stop-color="#fec6ff"/><stop offset="0.387" stop-color="#ff80b9"/><stop offset="0.529" stop-color="#ff457d"/><stop offset="0.773" stop-color="#ff144c"/><stop offset="1.000" stop-color="#ff0034"/></linearGradient><linearGradient id="n28" x1="0" x2="1"><stop offset="0.000" stop-color="#00f2ff"/><stop offset="0.026" stop-color="#03eeff"/><stop offset="0.274" stop-color="#dbbfff"/><stop offset="0.316" stop-color="#ffb2fa"/><stop offset="0.410" stop-color="#ff73b7"/><stop offset="0.564" stop-color="#ff3c7b"/><stop offset="0.829" stop-color="#ff0d4a"/><stop offset="1.000" stop-color="#ff0038"/></linearGradient><linearGradient id="n29" x1="0" x2="1"><stop offset="0.000" stop-color="#00e6ff"/><stop offset="0.035" stop-color="#0ae0ff"/><stop offset="0.296" stop-color="#e2b0ff"/><stop offset="0.330" stop-color="#ffa7fc"/><stop offset="0.426" stop-color="#ff6cba"/><stop offset="0.583" stop-color="#ff377e"/><stop offset="0.852" stop-color="#ff0b4d"/><stop offset="1.000" stop-color="#ff003d"/></linearGradient><linearGradient id="n30" x1="0" x2="1"><stop offset="0.000" stop-color="#00daff"/><stop offset="0.035" stop-color="#0ad4ff"/><stop offset="0.307" stop-color="#e1a3ff"/><stop offset="0.342" stop-color="#ff9cfe"/><stop offset="0.447" stop-color="#ff61b8"/><stop offset="0.614" stop-color="#ff2f7d"/><stop offset="0.904" stop-color="#ff054b"/><stop offset="1.000" stop-color="#ff0041"/></linearGradient><linearGradient id="n31" x1="0" x2="1"><stop offset="0.000" stop-color="#00cfff"/><stop offset="0.036" stop-color="#0acaff"/><stop offset="0.330" stop-color="#e896ff"/><stop offset="0.366" stop-color="#ff8bf9"/><stop offset="0.473" stop-color="#ff57b7"/><stop offset="0.652" stop-color="#ff277b"/><stop offset="0.955" stop-color="#ff004a"/><stop offset="1.000" stop-color="#ff0046"/></linearGradient><linearGradient id="n32" x1="0" x2="1"><stop offset="0.000" stop-color="#00c5ff"/><stop offset="0.036" stop-color="#09c0ff"/><stop offset="0.345" stop-color="#e78bff"/><stop offset="0.382" stop-color="#ff82fa"/><stop offset="0.500" stop-color="#ff4eb6"/><stop offset="0.691" stop-color="#ff207a"/><stop offset="0.991" stop-color="#ff004c"/><stop offset="1.000" stop-color="#ff004b"/></linearGradient><linearGradient id="n33" x1="0" x2="1"><stop offset="0.000" stop-color="#00bcff"/><stop offset="0.037" stop-color="#09b6ff"/><stop offset="0.361" stop-color="#e681ff"/><stop offset="0.398" stop-color="#ff79fc"/><stop offset="0.519" stop-color="#ff48b8"/><stop offset="0.713" stop-color="#ff1d7d"/><stop offset="1.000" stop-color="#ff0050"/></linearGradient><linearGradient id="n34" x1="0" x2="1"><stop offset="0.000" stop-color="#00b3ff"/><stop offset="0.038" stop-color="#09adff"/><stop offset="0.377" stop-color="#e578ff"/><stop offset="0.415" stop-color="#ff70fe"/><stop offset="0.538" stop-color="#ff42bb"/><stop offset="0.736" stop-color="#ff197f"/><stop offset="1.000" stop-color="#ff0056"/></linearGradient><linearGradient id="n35" x1="0" x2="1"><stop offset="0.000" stop-color="#00aaff"/><stop offset="0.038" stop-color="#09a5ff"/><stop offset="0.394" stop-color="#e46fff"/><stop offset="0.442" stop-color="#ff64f9"/><stop offset="0.577" stop-color="#ff38b6"/><stop offset="0.798" stop-color="#ff117a"/><stop offset="1.000" stop-color="#ff005b"/></linearGradient><linearGradient id="n36" x1="0" x2="1"><stop offset="0.000" stop-color="#00a3ff"/><stop offset="0.039" stop-color="#099dff"/><stop offset="0.408" stop-color="#e466ff"/><stop offset="0.456" stop-color="#ff5dfb"/><stop offset="0.592" stop-color="#ff33b8"/><stop offset="0.816" stop-color="#ff0e7d"/><stop offset="1.000" stop-color="#ff0060"/></linearGradient><linearGradient id="n37" x1="0" x2="1"><stop offset="0.000" stop-color="#009bff"/><stop offset="0.040" stop-color="#0896ff"/><stop offset="0.426" stop-color="#e35eff"/><stop offset="0.475" stop-color="#ff56fc"/><stop offset="0.624" stop-color="#ff2cb7"/><stop offset="0.861" stop-color="#ff097b"/><stop offset="1.000" stop-color="#ff0066"/></linearGradient><linearGradient id="n38" x1="0" x2="1"><stop offset="0.000" stop-color="#0094ff"/><stop offset="0.040" stop-color="#088fff"/><stop offset="0.444" stop-color="#e257ff"/><stop offset="0.505" stop-color="#ff4bf8"/><stop offset="0.667" stop-color="#ff24b3"/><stop offset="0.919" stop-color="#ff0379"/><stop offset="1.000" stop-color="#ff006c"/></linearGradient><linearGradient id="n39" x1="0" x2="1"><stop offset="0.000" stop-color="#008dff"/><stop offset="0.041" stop-color="#0888ff"/><stop offset="0.464" stop-color="#e250ff"/><stop offset="0.526" stop-color="#ff45f9"/><stop offset="0.691" stop-color="#ff20b5"/><stop offset="0.948" stop-color="#ff007b"/><stop offset="1.000" stop-color="#ff0073"/></linearGradient><linearGradient id="n40" x1="0" x2="1"><stop offset="0.000" stop-color="#0087ff"/><stop offset="0.042" stop-color="#0882ff"/><stop offset="0.495" stop-color="#e748ff"/><stop offset="0.547" stop-color="#ff3ffb"/><stop offset="0.716" stop-color="#ff1cb7"/><stop offset="0.989" stop-color="#ff007b"/><stop offset="1.000" stop-color="#ff007a"/></linearGradient><linearGradient id="n41" x1="0" x2="1"><stop offset="0.000" stop-color="#0081ff"/><stop offset="0.054" stop-color="#0c7bff"/><stop offset="0.527" stop-color="#eb40ff"/><stop offset="0.581" stop-color="#ff36f7"/><stop offset="0.763" stop-color="#ff15b3"/><stop offset="1.000" stop-color="#ff0081"/></linearGradient><linearGradient id="n42" x1="0" x2="1"><stop offset="0.000" stop-color="#007bff"/><stop offset="0.055" stop-color="#0c75ff"/><stop offset="0.549" stop-color="#eb3aff"/><stop offset="0.604" stop-color="#ff31f8"/><stop offset="0.791" stop-color="#ff11b5"/><stop offset="1.000" stop-color="#ff0088"/></linearGradient><linearGradient id="n43" x1="0" x2="1"><stop offset="0.000" stop-color="#0076ff"/><stop offset="0.056" stop-color="#0c70ff"/><stop offset="0.567" stop-color="#ea34ff"/><stop offset="0.622" stop-color="#ff2cfa"/><stop offset="0.811" stop-color="#ff0eb7"/><stop offset="1.000" stop-color="#ff008e"/></linearGradient><linearGradient id="n44" x1="0" x2="1"><stop offset="0.000" stop-color="#0071ff"/><stop offset="0.057" stop-color="#0a6bff"/><stop offset="0.591" stop-color="#e72fff"/><stop offset="0.659" stop-color="#ff25f8"/><stop offset="0.864" stop-color="#ff08b4"/><stop offset="1.000" stop-color="#ff0097"/></linearGradient><linearGradient id="n45" x1="0" x2="1"><stop offset="0.000" stop-color="#006cff"/><stop offset="0.058" stop-color="#0a66ff"/><stop offset="0.616" stop-color="#e72aff"/><stop offset="0.686" stop-color="#ff21f9"/><stop offset="0.895" stop-color="#ff05b6"/><stop offset="1.000" stop-color="#ff00a0"/></linearGradient><linearGradient id="n46" x1="0" x2="1"><stop offset="0.000" stop-color="#0067ff"/><stop offset="0.060" stop-color="#0a61ff"/><stop offset="0.643" stop-color="#e625ff"/><stop offset="0.714" stop-color="#ff1cfa"/><stop offset="0.940" stop-color="#ff01b5"/><stop offset="1.000" stop-color="#ff00a8"/></linearGradient><linearGradient id="n47" x1="0" x2="1"><stop offset="0.000" stop-color="#0063ff"/><stop offset="0.060" stop-color="#0a5dff"/><stop offset="0.663" stop-color="#e520ff"/><stop offset="0.735" stop-color="#ff17fc"/><stop offset="0.964" stop-color="#ff00b7"/><stop offset="1.000" stop-color="#ff00af"/></linearGradient><linearGradient id="n48" x1="0" x2="1"><stop offset="0.000" stop-color="#005eff"/><stop offset="0.074" stop-color="#0e58ff"/><stop offset="0.704" stop-color="#ea1aff"/><stop offset="0.778" stop-color="#ff12f8"/><stop offset="1.000" stop-color="#ff00b9"/></linearGradient><linearGradient id="n49" x1="0" x2="1"><stop offset="0.000" stop-color="#005aff"/><stop offset="0.076" stop-color="#0d54ff"/><stop offset="0.734" stop-color="#e916ff"/><stop offset="0.810" stop-color="#ff0df9"/><stop offset="1.000" stop-color="#ff00c3"/></linearGradient><linearGradient id="n50" x1="0" x2="1"><stop offset="0.000" stop-color="#0056ff"/><stop offset="0.078" stop-color="#0d50ff"/><stop offset="0.766" stop-color="#e812ff"/><stop offset="0.844" stop-color="#ff0afa"/><stop offset="1.000" stop-color="#ff00ce"/></linearGradient><linearGradient id="n51" x1="0" x2="1"><stop offset="0.000" stop-color="#0052ff"/><stop offset="0.080" stop-color="#0d4cff"/><stop offset="0.813" stop-color="#ec0cff"/><stop offset="0.880" stop-color="#ff06fc"/><stop offset="1.000" stop-color="#ff00d9"/></linearGradient><linearGradient id="n52" x1="0" x2="1"><stop offset="0.000" stop-color="#004eff"/><stop offset="0.082" stop-color="#0d48ff"/><stop offset="0.849" stop-color="#eb08ff"/><stop offset="0.932" stop-color="#ff01f8"/><stop offset="1.000" stop-color="#ff00e5"/></linearGradient><linearGradient id="n53" x1="0" x2="1"><stop offset="0.000" stop-color="#004bff"/><stop offset="0.099" stop-color="#1044ff"/><stop offset="0.901" stop-color="#ef03ff"/><stop offset="0.972" stop-color="#ff00fa"/><stop offset="1.000" stop-color="#ff00f1"/></linearGradient><linearGradient id="n54" x1="0" x2="1"><stop offset="0.000" stop-color="#0047ff"/><stop offset="0.100" stop-color="#1040ff"/><stop offset="0.929" stop-color="#ee00ff"/><stop offset="1.000" stop-color="#ff00fb"/></linearGradient><linearGradient id="n55" x1="0" x2="1"><stop offset="0.000" stop-color="#0044ff"/><stop offset="0.103" stop-color="#103dff"/><stop offset="0.971" stop-color="#ee00ff"/><stop offset="1.000" stop-color="#f600ff"/></linearGradient><linearGradient id="n56" x1="0" x2="1"><stop offset="0.000" stop-color="#0041ff"/><stop offset="0.106" stop-color="#103aff"/><stop offset="1.000" stop-color="#e900ff"/></linearGradient><linearGradient id="n57" x1="0" x2="1"><stop offset="0.000" stop-color="#003eff"/><stop offset="0.125" stop-color="#1336ff"/><stop offset="1.000" stop-color="#dd00ff"/></linearGradient><linearGradient id="n58" x1="0" x2="1"><stop offset="0.000" stop-color="#003bff"/><stop offset="0.129" stop-color="#1233ff"/><stop offset="1.000" stop-color="#d100ff"/></linearGradient><linearGradient id="n59" x1="0" x2="1"><stop offset="0.000" stop-color="#0038ff"/><stop offset="0.150" stop-color="#1530ff"/><stop offset="1.000" stop-color="#c600ff"/></linearGradient><linearGradient id="n60" x1="0" x2="1"><stop offset="0.000" stop-color="#0035ff"/><stop offset="0.155" stop-color="#152dff"/><stop offset="1.000" stop-color="#bb00ff"/></linearGradient><linearGradient id="n61" x1="0" x2="1"><stop offset="0.000" stop-color="#0033ff"/><stop offset="0.175" stop-color="#1829ff"/><stop offset="1.000" stop-color="#b400ff"/></linearGradient><linearGradient id="n62" x1="0" x2="1"><stop offset="0.000" stop-color="#0030ff"/><stop offset="0.182" stop-color="#1727ff"/><stop offset="1.000" stop-color="#aa00ff"/></linearGradient><linearGradient id="n63" x1="0" x2="1"><stop offset="0.000" stop-color="#002dff"/><stop offset="0.208" stop-color="#1a24ff"/><stop offset="1.000" stop-color="#a000ff"/></linearGradient><linearGradient id="n64" x1="0" x2="1"><stop offset="0.000" stop-color="#002bff"/><stop offset="0.235" stop-color="#1d20ff"/><stop offset="1.000" stop-color="#9700ff"/></linearGradient><linearGradient id="n65" x1="0" x2="1"><stop offset="0.000" stop-color="#0029ff"/><stop offset="0.180" stop-color="#1321ff"/><stop offset="1.000" stop-color="#9000ff"/></linearGradient><linearGradient id="n66" x1="0" x2="1"><stop offset="0.000" stop-color="#0027ff"/><stop offset="0.188" stop-color="#121fff"/><stop offset="1.000" stop-color="#8800ff"/></linearGradient><linearGradient id="n67" x1="0" x2="1"><stop offset="0.000" stop-color="#0024ff"/><stop offset="0.217" stop-color="#151cff"/><stop offset="1.000" stop-color="#7f00ff"/></linearGradient><linearGradient id="n68" x1="0" x2="1"><stop offset="0.000" stop-color="#0022ff"/><stop offset="0.227" stop-color="#151aff"/><stop offset="1.000" stop-color="#7700ff"/></linearGradient><linearGradient id="n69" x1="0" x2="1"><stop offset="0.000" stop-color="#0020ff"/><stop offset="0.262" stop-color="#1717ff"/><stop offset="1.000" stop-color="#7000ff"/></linearGradient><linearGradient id="n70" x1="0" x2="1"><stop offset="0.000" stop-color="#001eff"/><stop offset="0.275" stop-color="#1715ff"/><stop offset="1.000" stop-color="#6800ff"/></linearGradient><linearGradient id="n71" x1="0" x2="1"><stop offset="0.000" stop-color="#001cff"/><stop offset="0.316" stop-color="#1913ff"/><stop offset="1.000" stop-color="#6100ff"/></linearGradient><linearGradient id="n72" x1="0" x2="1"><stop offset="0.000" stop-color="#001aff"/><stop offset="0.351" stop-color="#1c10ff"/><stop offset="1.000" stop-color="#5d00ff"/></linearGradient><linearGradient id="n73" x1="0" x2="1"><stop offset="0.000" stop-color="#0018ff"/><stop offset="0.400" stop-color="#1e0dff"/><stop offset="1.000" stop-color="#5600ff"/></linearGradient><linearGradient id="n74" x1="0" x2="1"><stop offset="0.000" stop-color="#0017ff"/><stop offset="0.455" stop-color="#200bff"/><stop offset="1.000" stop-color="#4f00ff"/></linearGradient><linearGradient id="n75" x1="0" x2="1"><stop offset="0.000" stop-color="#0015ff"/><stop offset="0.516" stop-color="#2208ff"/><stop offset="1.000" stop-color="#4900ff"/></linearGradient><linearGradient id="n76" x1="0" x2="1"><stop offset="0.000" stop-color="#0013ff"/><stop offset="0.621" stop-color="#2705ff"/><stop offset="1.000" stop-color="#4300ff"/></linearGradient><linearGradient id="n77" x1="0" x2="1"><stop offset="0.000" stop-color="#0012ff"/><stop offset="0.741" stop-color="#2b02ff"/><stop offset="1.000" stop-color="#3d00ff"/></linearGradient><linearGradient id="n78" x1="0" x2="1"><stop offset="0.000" stop-color="#0010ff"/><stop offset="0.880" stop-color="#3000ff"/><stop offset="1.000" stop-color="#3700ff"/></linearGradient><linearGradient id="n79" x1="0" x2="1"><stop offset="0.000" stop-color="#000eff"/><stop offset="1.000" stop-color="#3400ff"/></linearGradient><linearGradient id="n80" x1="0" x2="1"><stop offset="0.000" stop-color="#000dff"/><stop offset="1.000" stop-color="#2f00ff"/></linearGradient><linearGradient id="n81" x1="0" x2="1"><stop offset="0.000" stop-color="#000bff"/><stop offset="1.000" stop-color="#2900ff"/></linearGradient><linearGradient id="n82" x1="0" x2="1"><stop offset="0.000" stop-color="#000aff"/><stop offset="1.000" stop-color="#2400ff"/></linearGradient><linearGradient id="n83" x1="0" x2="1"><stop offset="0.000" stop-color="#0008ff"/><stop offset="1.000" stop-color="#1f00ff"/></linearGradient><linearGradient id="n84" x1="0" x2="1"><stop offset="0.000" stop-color="#0007ff"/><stop offset="1.000" stop-color="#1a00ff"/></linearGradient><linearGradient id="n85" x1="0" x2="1"><stop offset="0.000" stop-color="#0006ff"/><stop offset="1.000" stop-color="#1700ff"/></linearGradient><linearGradient id="n86" x1="0" x2="1"><stop offset="0.000" stop-color="#0005ff"/><stop offset="1.000" stop-color="#1200ff"/></linearGradient><linearGradient id="n87" x1="0" x2="1"><stop offset="0.000" stop-color="#0003ff"/><stop offset="1.000" stop-color="#0e00ff"/></linearGradient><linearGradient id="n88" x1="0" x2="1"><stop offset="0.000" stop-color="#0002ff"/><stop offset="1.000" stop-color="#0900ff"/></linearGradient><linearGradient id="n89" x1="0" x2="1"><stop offset="0.000" stop-color="#0001ff"/><stop offset="1.000" stop-color="#0500ff"/></linearGradient><clipPath id="cpLocus"><path d="M1536.6 704.2L1531.7 704.0L1531.4 703.8L1531.0 703.5L1530.5 703.2L1530.0 702.9L1529.4 702.5L1528.9 702.1L1528.3 701.7L1527.8 701.3L1527.2 700.8L1526.5 700.3L1525.8 699.8L1525.1 699.2L1524.3 698.6L1523.5 697.9L1522.6 697.2L1521.6 696.4L1520.7 695.6L1519.6 694.8L1518.6 693.9L1517.5 693.0L1516.4 692.0L1515.2 691.0L1514.0 690.0L1512.8 688.9L1511.5 687.8L1510.1 686.7L1508.7 685.5L1507.2 684.3L1505.7 683.0L1504.1 681.7L1502.3 680.3L1500.5 678.8L1498.7 677.3L1496.7 675.7L1494.7 674.0L1492.6 672.3L1490.5 670.6L1488.4 668.8L1486.1 667.0L1483.8 665.0L1481.4 663.0L1478.9 660.8L1476.3 658.6L1473.6 656.2L1470.9 653.8L1468.0 651.2L1465.1 648.5L1462.0 645.6L1458.9 642.6L1455.8 639.6L1452.5 636.4L1449.1 632.9L1445.6 629.2L1441.8 625.0L1437.7 620.4L1433.5 615.5L1429.1 610.2L1424.5 604.7L1419.7 598.8L1414.9 592.5L1409.9 586.0L1404.8 579.0L1399.5 571.8L1394.1 564.2L1388.7 556.3L1383.2 548.2L1377.6 539.6L1371.8 530.7L1366.0 521.5L1360.2 512.1L1354.4 502.5L1348.7 492.9L1343.1 483.2L1337.3 473.3L1331.6 463.2L1326.1 453.1L1320.7 443.1L1315.6 433.2L1310.8 423.4L1306.1 413.6L1301.7 403.8L1297.5 394.3L1293.5 384.9L1289.7 375.9L1286.2 367.2L1282.9 358.7L1279.9 350.4L1277.1 342.4L1274.5 334.8L1272.1 327.6L1270.1 320.7L1268.2 314.3L1266.6 308.1L1265.3 302.3L1264.1 296.9L1263.1 291.6L1262.2 286.8L1261.6 282.2L1261.2 278.0L1260.9 274.0L1260.8 270.2L1260.9 266.6L1261.0 263.2L1261.4 260.1L1261.9 257.2L1262.6 254.4L1263.4 251.9L1264.3 249.4L1265.4 247.2L1266.6 245.1L1267.9 243.3L1269.4 241.5L1270.9 240.0L1272.6 238.5L1274.3 237.3L1276.1 236.2L1278.1 235.2L1280.1 234.4L1282.1 233.6L1284.3 233.0L1286.4 232.4L1288.7 232.0L1291.0 231.6L1293.4 231.4L1295.8 231.1L1298.2 230.9L1300.6 230.7L1303.1 230.6L1305.7 230.5L1308.2 230.5L1310.8 230.4L1313.4 230.4L1315.9 230.4L1318.5 230.4L1321.0 230.4L1323.6 230.5L1326.2 230.5L1328.8 230.6L1331.4 230.7L1334.0 230.8L1336.7 230.9L1339.4 231.0L1342.1 231.2L1344.9 231.4L1347.7 231.5L1350.5 231.7L1353.4 231.9L1356.3 232.1L1359.2 232.4L1362.2 232.6L1365.2 232.9L1368.3 233.1L1371.4 233.4L1374.5 233.7L1377.8 234.0L1381.0 234.3L1384.3 234.6L1387.7 235.0L1391.1 235.3L1394.6 235.7L1398.1 236.0L1401.7 236.4L1405.4 236.8L1409.1 237.2L1412.9 237.6L1416.7 238.0L1420.7 238.4L1424.6 238.9L1428.7 239.3L1432.8 239.8L1437.0 240.2L1441.3 240.7L1445.6 241.2L1450.0 241.7L1454.5 242.2L1459.1 242.7L1463.7 243.2L1468.4 243.8L1473.2 244.3L1478.1 244.9L1483.1 245.4L1488.1 246.0L1493.2 246.6L1498.4 247.2L1503.6 247.8L1509.0 248.4L1514.4 249.0L1519.9 249.7L1525.5 250.3L1531.1 250.9L1536.8 251.6L1542.6 252.3L1548.5 252.9L1554.5 253.6L1560.5 254.3L1566.6 255.0L1572.7 255.7L1578.9 256.5L1585.2 257.2L1591.5 257.9L1597.9 258.6L1604.4 259.4L1610.9 260.1L1617.3 260.9L1623.9 261.6L1630.5 262.4L1637.1 263.1L1643.7 263.9L1650.3 264.7L1656.8 265.4L1663.3 266.2L1669.7 266.9L1676.1 267.6L1682.4 268.4L1688.8 269.1L1695.1 269.8L1701.4 270.5L1707.7 271.3L1713.9 272.0L1720.2 272.7L1726.3 273.4L1732.3 274.1L1738.1 274.8L1743.9 275.4L1749.6 276.1L1755.2 276.7L1760.7 277.3L1766.0 277.9L1771.2 278.5L1776.4 279.1L1781.4 279.7L1786.3 280.3L1791.1 280.8L1795.8 281.4L1800.3 281.9L1804.7 282.4L1809.0 282.9L1813.2 283.4L1817.2 283.9L1821.2 284.3L1825.0 284.7L1828.7 285.2L1832.3 285.6L1835.7 286.0L1839.1 286.4L1842.4 286.7L1845.6 287.1L1848.7 287.5L1851.7 287.8L1854.7 288.1L1857.5 288.5L1860.3 288.8L1863.1 289.1L1865.8 289.4L1868.4 289.7L1870.9 290.0L1873.4 290.3L1875.9 290.6L1878.2 290.9L1880.5 291.1L1882.7 291.4L1884.9 291.6L1887.0 291.9L1889.0 292.1L1890.9 292.3L1892.8 292.5L1894.6 292.7L1896.3 292.9L1898.0 293.1L1899.6 293.3L1901.1 293.5L1902.4 293.6L1903.7 293.8L1905.0 293.9L1906.3 294.1L1907.8 294.3L1909.5 294.4L1911.4 294.7L1913.3 294.9L1915.3 295.1L1917.2 295.3L1919.0 295.5L1920.8 295.8L1922.6 296.0L1924.4 296.2L1926.0 296.4L1927.5 296.5L1928.8 296.7L1929.8 296.8L1930.6 296.9L1931.3 297.0L1931.8 297.0L1932.2 297.1L1932.6 297.1Z"/></clipPath><clipPath id="cpTri"><path d="M1795.4 281.3L1365.8 238.0L1448.8 586.8Z"/></clipPath><clipPath id="cpPlot"><rect x="1259.3" y="219" width="648" height="499"/></clipPath><filter id="fBlur" x="-5%" y="-5%" width="110%" height="110%"><feGaussianBlur stdDeviation="1.2 2.2"/></filter><linearGradient id="gInB" x1="0" y1="0" x2="1" y2="1"><stop offset="0" stop-color="#a8ff00"/><stop offset="0.5" stop-color="#ffff00"/><stop offset="1" stop-color="#ffb800"/></linearGradient><linearGradient id="gInD" x1="0" y1="0" x2="1" y2="1"><stop offset="0" stop-color="#609600"/><stop offset="0.5" stop-color="#989800"/><stop offset="1" stop-color="#987000"/></linearGradient><linearGradient id="gHdr" x1="0" y1="0" x2="0" y2="1"><stop offset="0" stop-color="#2e2e2e"/><stop offset="0.45" stop-color="#2e2e2e"/><stop offset="0.5" stop-color="#171717"/><stop offset="1" stop-color="#141414"/></linearGradient><linearGradient id="gTB" x1="0" y1="0" x2="0" y2="1"><stop offset="0" stop-color="#474747"/><stop offset="1" stop-color="#262626"/></linearGradient><linearGradient id="gSwB" x1="0" y1="0" x2="0" y2="1"><stop offset="0" stop-color="#ababab"/><stop offset="0.5" stop-color="#808080"/><stop offset="1" stop-color="#555"/></linearGradient><linearGradient id="gSwSel" x1="0" y1="0" x2="0" y2="1"><stop offset="0" stop-color="#1a1a1a"/><stop offset="1" stop-color="#363636"/></linearGradient><linearGradient id="gUpC" x1="0" y1="0" x2="0" y2="1"><stop offset="0" stop-color="#5e5e5e"/><stop offset="1" stop-color="#a4a4a4"/></linearGradient><linearGradient id="gStop" x1="0" y1="0" x2="0" y2="1"><stop offset="0" stop-color="#b4b4b4"/><stop offset="0.3" stop-color="#8e8e8e"/><stop offset="0.35" stop-color="#a8a8a8"/><stop offset="1" stop-color="#6e6e6e"/></linearGradient><linearGradient id="gNav" x1="0" y1="0" x2="0" y2="1"><stop offset="0" stop-color="#bcbcbc"/><stop offset="0.6" stop-color="#989898"/><stop offset="1" stop-color="#6a6a6a"/></linearGradient><linearGradient id="gNavC" x1="0" y1="0" x2="0" y2="1"><stop offset="0" stop-color="#8a8a8a"/><stop offset="1" stop-color="#aaaaaa"/></linearGradient><linearGradient id="gRightEdge" x1="0" y1="0" x2="1" y2="0"><stop offset="0" stop-color="#000" stop-opacity="0"/><stop offset="1" stop-color="#000" stop-opacity="0.65"/></linearGradient></defs>
<rect x="0" y="0" width="1920" height="1146" fill="#232323"/>
<rect x="0" y="0" width="1920" height="25" fill="#00c96b"/>
<g fill="none" stroke-width="2.3" stroke-linecap="round" stroke-linejoin="round"><path d="M7 7.4L10.5 4.6L14 7.4" stroke="#ffc800"/><path d="M5.3 9.4L2.5 12.65L5.3 15.9" stroke="#33c6ff"/><path d="M7 17.9L10.5 20.8L14 17.9" stroke="#ff1c5c"/></g>
<path d="M10.5 7.6000000000000005L12.7 9.8L10.5 12.0L8.3 9.8Z" fill="#ffc800"/>
<path d="M7.6 10.45L9.8 12.65L7.6 14.850000000000001L5.3999999999999995 12.65Z" fill="#33c6ff"/>
<path d="M10.5 13.2L12.7 15.4L10.5 17.6L8.3 15.4Z" fill="#ff1c5c"/>
<path d="M15.6 8.850000000000001L19.4 12.65L15.6 16.45L11.8 12.65Z" fill="#00dc00"/>
<text x="26.5" y="17.8" font-size="13.2" fill="#0b2416" textLength="515.5" lengthAdjust="spacingAndGlyphs">Calman 2025 Calman Ultimate for Business 147 Days Remaining  - Analysis/SDR Toolkit</text>
<path d="M1782 12.5H1793" stroke="#0b2416" stroke-width="1"/>
<rect x="1834.5" y="9.5" width="8" height="8" rx="1.2" fill="none" stroke="#0b2416" stroke-width="1"/>
<path d="M1836.5 7.5H1843a1.8 1.8 0 0 1 1.8 1.8V15.5" fill="none" stroke="#0b2416" stroke-width="1"/>
<path d="M1887.3 7.3L1898.3 17.8M1898.3 7.3L1887.3 17.8" stroke="#0b2416" stroke-width="1"/>
<path d="M1 25H205V52a6 6 0 0 1-6 6H7a6 6 0 0 1-6-6Z" fill="url(#gRed)" stroke="#5a5a5a" stroke-width="1"/>
<g fill="none" stroke="#fff" stroke-width="2.6" stroke-linejoin="round" stroke-linecap="round"><path d="M34.6 34.3L38.6 30.3L42.6 34.3"/><path d="M45.900000000000006 37.6L49.900000000000006 41.6L45.900000000000006 45.6"/><path d="M34.6 48.900000000000006L38.6 52.900000000000006L42.6 48.900000000000006"/><path d="M31.3 37.6L27.3 41.6L31.3 45.6"/></g>
<path d="M38.6 33.8L41.7 36.9L38.6 40.0L35.5 36.9Z" fill="#fff" stroke="#fff" stroke-width="0.6" stroke-linejoin="round"/>
<path d="M43.300000000000004 38.5L46.400000000000006 41.6L43.300000000000004 44.7L40.2 41.6Z" fill="#fff" stroke="#fff" stroke-width="0.6" stroke-linejoin="round"/>
<path d="M38.6 43.2L41.7 46.300000000000004L38.6 49.400000000000006L35.5 46.300000000000004Z" fill="#fff" stroke="#fff" stroke-width="0.6" stroke-linejoin="round"/>
<path d="M33.9 38.5L37.0 41.6L33.9 44.7L30.799999999999997 41.6Z" fill="#fff" stroke="#fff" stroke-width="0.6" stroke-linejoin="round"/>
<g fill="none" stroke="#fff" stroke-width="2.6"><path d="M67.6 36.9A6.1 6.1 0 1 0 67.6 45.9"/><circle cx="76.4" cy="41.4" r="5.9"/><path d="M83 34V48.9"/><path d="M89.1 28.1V48.9"/><path d="M95.2 48.9V40.3A4.95 4.95 0 0 1 105.1 40.3V48.9M105.1 40.3A4.85 4.85 0 0 1 114.8 40.3V48.9"/><circle cx="125.6" cy="41.4" r="5.9"/><path d="M132.4 34V48.9"/><path d="M137.4 48.9V41.85A6.5 6.5 0 0 1 150.4 41.85V48.9"/></g>
<circle cx="186.8" cy="41.1" r="10.8" fill="url(#gRedBtn)"/>
<path d="M182 39.5H191.5L186.75 45.5Z" fill="#fff"/>
<rect x="213" y="40" width="1707" height="5" fill="url(#gRainbow)"/>
<path d="M0 64.5H218a6 6 0 0 1 6 6V1146H0Z" fill="#565656"/>
<rect x="222.5" y="99" width="2.5" height="1047" fill="#484848"/>
<rect x="225" y="99" width="1695" height="1047" fill="#333333"/>
<circle cx="21.2" cy="81.6" r="11" fill="url(#gKnobRing)"/>
<circle cx="20.4" cy="79.8" r="4" fill="url(#gBall)"/>
<circle cx="203.5" cy="80.5" r="11" fill="url(#gCircBtn)"/>
<path d="M199.5 80.5L205.5 75.2V85.8Z" fill="#fff"/>
<text x="10.0" y="113.3" font-size="13.4" fill="#e8e8e8" textLength="71.7" lengthAdjust="spacingAndGlyphs">SDR Toolkit</text>
<rect x="10.5" y="118.5" width="205" height="298" fill="#1f1f1f"/>
<rect x="10.5" y="118.5" width="205" height="6" fill="url(#gTreeTop)"/>
<path d="M26 135.5H20.5L26 130.0Z" fill="#5a5a5a"/>
<path d="M26 186.8H20.5L26 181.3Z" fill="#5a5a5a"/>
<text x="33.6" y="138.5" font-size="12.0" fill="#f4f4f4" font-weight="bold" textLength="52.2" lengthAdjust="spacingAndGlyphs">Welcome</text>
<text x="33.6" y="189.6" font-size="12.0" fill="#f4f4f4" font-weight="bold" textLength="45.6" lengthAdjust="spacingAndGlyphs">Analysis</text>
<rect x="46.3" y="293.3" width="105.4" height="16.7" fill="url(#gSel)"/>
<text x="48.6" y="156.3" font-size="12.0" fill="#ececec" textLength="51.5" lengthAdjust="spacingAndGlyphs">Welcome</text>
<text x="48.6" y="173.1" font-size="12.0" fill="#ececec" textLength="43.0" lengthAdjust="spacingAndGlyphs">Options</text>
<text x="48.6" y="207.6" font-size="12.0" fill="#ececec" textLength="84.5" lengthAdjust="spacingAndGlyphs">Dynamic Range</text>
<text x="48.6" y="224.0" font-size="12.0" fill="#ececec" textLength="80.7" lengthAdjust="spacingAndGlyphs">Grayscale - 2pt</text>
<text x="48.6" y="240.6" font-size="12.0" fill="#ececec" textLength="91.7" lengthAdjust="spacingAndGlyphs">Grayscale - Multi</text>
<text x="48.6" y="257.0" font-size="12.0" fill="#ececec" textLength="69.7" lengthAdjust="spacingAndGlyphs">Color Gamut</text>
<text x="48.6" y="273.6" font-size="12.0" fill="#ececec" textLength="39.0" lengthAdjust="spacingAndGlyphs">3D LUT</text>
<text x="48.6" y="290.0" font-size="12.0" fill="#ececec" textLength="72.6" lengthAdjust="spacingAndGlyphs">ColorChecker</text>
<text x="48.6" y="306.6" font-size="12.0" fill="#333" textLength="100.7" lengthAdjust="spacingAndGlyphs">Saturation Sweeps</text>
<text x="48.6" y="323.0" font-size="12.0" fill="#ececec" textLength="103.6" lengthAdjust="spacingAndGlyphs">Luminance Sweeps</text>
<text x="48.6" y="339.6" font-size="12.0" fill="#ececec" textLength="52.3" lengthAdjust="spacingAndGlyphs">Additivity</text>
<text x="48.6" y="356.0" font-size="12.0" fill="#ececec" textLength="98.4" lengthAdjust="spacingAndGlyphs">Screen Uniformity</text>
<text x="48.6" y="372.2" font-size="12.0" fill="#ececec" textLength="96.0" lengthAdjust="spacingAndGlyphs">Screen Angularity</text>
<text x="48.6" y="388.4" font-size="12.0" fill="#ececec" textLength="83.6" lengthAdjust="spacingAndGlyphs">Screen Stability</text>
<text x="48.6" y="404.6" font-size="12.0" fill="#ececec" textLength="108.8" lengthAdjust="spacingAndGlyphs">Spectral Power Dist.</text>
<path d="M225.5 99V71a6 6 0 0 1 6-6H322.5a6 6 0 0 1 6 6V99Z" fill="url(#gTab)"/>
<path d="M225.8 99V71a6 6 0 0 1 6-6H322.2a6 6 0 0 1 6 6V99" fill="none" stroke="#909090" stroke-width="1.2"/>
<rect x="290" y="66" width="1.5" height="33" fill="#3a3a3a"/>
<text x="232.0" y="88.2" font-size="13.6" fill="#eaeaea" textLength="52.3" lengthAdjust="spacingAndGlyphs">History 1</text>
<circle cx="308.5" cy="84" r="11" fill="url(#gPlus)"/>
<path d="M304.5 84.5H312.5M308.5 80.5V88.5" stroke="#707070" stroke-width="1.2"/>
<path d="M1366.5 98.5V71a6 6 0 0 1 6-6H1521a6 6 0 0 1 6 6V98.5Z" fill="url(#gCtl)"/>
<path d="M1366.5 98.5V71a6 6 0 0 1 6-6H1373.5V98.5Z" fill="#10d010"/>
<rect x="1486.2" y="68" width="1.6" height="30.5" fill="#3c3c3c"/>
<text x="1376.0" y="78.0" font-size="12.0" fill="#eeeeee" textLength="74.0" lengthAdjust="spacingAndGlyphs">X-Rite i1Pro 2</text>
<text x="1376.0" y="94.5" font-size="12.0" fill="#eeeeee" textLength="62.0" lengthAdjust="spacingAndGlyphs">Direct View</text>
<circle cx="1465" cy="82" r="11" fill="url(#gDrop)"/>
<path d="M1459.5 79.5H1470.5L1465 85.5Z" fill="#fff"/>
<circle cx="1510" cy="81.7" r="13.8" fill="#0000f0" stroke="#e0e0ff" stroke-width="1.6"/>
<text x="1502.0" y="85.5" font-size="9.8" fill="#fff" textLength="16.5" lengthAdjust="spacingAndGlyphs">236</text>
<path d="M1534 98.5V71a6 6 0 0 1 6-6H1674a6 6 0 0 1 6 6V98.5Z" fill="url(#gCtl)"/>
<path d="M1534 98.5V71a6 6 0 0 1 6-6H1541V98.5Z" fill="#f0f000"/>
<text x="1544.0" y="78.0" font-size="12.0" fill="#eeeeee" textLength="38.0" lengthAdjust="spacingAndGlyphs">Source</text>
<circle cx="1662" cy="82" r="11" fill="url(#gDrop)"/>
<path d="M1656.5 79.5H1667.5L1662 85.5Z" fill="#fff"/>
<path d="M1687 98.5V71a6 6 0 0 1 6-6H1842.5a6 6 0 0 1 6 6V98.5Z" fill="url(#gCtl)"/>
<path d="M1687 98.5V71a6 6 0 0 1 6-6H1694V98.5Z" fill="#f0f000"/>
<text x="1697.0" y="78.0" font-size="12.0" fill="#eeeeee" textLength="118.0" lengthAdjust="spacingAndGlyphs">Direct Display Control</text>
<circle cx="1830" cy="82" r="11" fill="url(#gDrop)"/>
<path d="M1824.5 79.5H1835.5L1830 85.5Z" fill="#fff"/>
<rect x="1852" y="65.5" width="37" height="30.5" rx="4" fill="url(#gSq)" stroke="#b4b4b4" stroke-width="1.3"/>
<rect x="1890" y="65.5" width="34" height="30.5" rx="4" fill="url(#gSq)" stroke="#b4b4b4" stroke-width="1.3"/>
<circle cx="1870.4" cy="80.8" r="11" fill="url(#gSqC)"/>
<circle cx="1906" cy="80.5" r="11" fill="url(#gSqC)"/>
<path d="M1870.60 73.40L1872.59 76.00L1875.83 75.57L1875.40 78.81L1878.00 80.80L1875.40 82.79L1875.83 86.03L1872.59 85.60L1870.60 88.20L1868.61 85.60L1865.37 86.03L1865.80 82.79L1863.20 80.80L1865.80 78.81L1865.37 75.57L1868.61 76.00Z" fill="#e0e0e0" stroke="#e0e0e0" stroke-width="0.8" stroke-linejoin="round"/>
<circle cx="1870.6" cy="80.8" r="3.3" fill="#6e6e6e"/>
<path d="M1901 80.5L1907.5 75V86Z" fill="#fff"/>
<text x="233.8" y="224.2" font-size="40.5" fill="#f2f2f2" textLength="337.0" lengthAdjust="spacingAndGlyphs">Saturation Sweeps</text>
<text x="793.0" y="216.0" font-size="19.8" fill="#f0f0f0" textLength="61.5" lengthAdjust="spacingAndGlyphs">Levels:</text>
<rect x="862.5" y="195.7" width="344" height="25.5" fill="url(#gDD)" stroke="#3a3a3a" stroke-width="1"/>
<text x="867.0" y="216.0" font-size="16.5" fill="#f0f0f0" textLength="91.0" lengthAdjust="spacingAndGlyphs">20% Sweeps</text>
<path d="M1190 205.5H1200L1195 211Z" fill="#111"/>
<text x="351.0" y="277.9" font-size="20.0" fill="#f0f0f0" textLength="109.4" lengthAdjust="spacingAndGlyphs">dE Formula:</text>
<rect x="468.8" y="258" width="136.4" height="25" fill="url(#gDD)" stroke="#3a3a3a" stroke-width="1"/>
<text x="474.0" y="278.0" font-size="16.0" fill="#f0f0f0" textLength="35.0" lengthAdjust="spacingAndGlyphs">2000</text>
<path d="M589.5 267.5H599.5L594.5 273Z" fill="#111"/>
<text x="369.0" y="310.2" font-size="14.2" fill="#e4e4e4" textLength="80.6" lengthAdjust="spacingAndGlyphs">DeltaE 2000</text>
<rect x="269.2" y="316" width="316.59999999999997" height="392" fill="#222222"/>
<path d="M311.3 316V708" stroke="#8c8c8c" stroke-width="1.5"/>
<path d="M353.5 316V708" stroke="#8c8c8c" stroke-width="1.5"/>
<path d="M395.6 316V708" stroke="#8c8c8c" stroke-width="1.5"/>
<path d="M437.8 316V708" stroke="#8c8c8c" stroke-width="1.5"/>
<path d="M479.9 316V708" stroke="#8c8c8c" stroke-width="1.5"/>
<path d="M522.0 316V708" stroke="#8c8c8c" stroke-width="1.5"/>
<path d="M564.2 316V708" stroke="#8c8c8c" stroke-width="1.5"/>
<path d="M269.2 316H585.8V708" fill="none" stroke="#9a9a9a" stroke-width="1.8"/>
<path d="M269.2 315V708H585.8" fill="none" stroke="#9a9a9a" stroke-width="2"/>
<path d="M263 316H269.2" stroke="#9a9a9a" stroke-width="1.8"/>
<path d="M263 372H269.2" stroke="#9a9a9a" stroke-width="1.8"/>
<path d="M263 428H269.2" stroke="#9a9a9a" stroke-width="1.8"/>
<path d="M263 484H269.2" stroke="#9a9a9a" stroke-width="1.8"/>
<path d="M263 540H269.2" stroke="#9a9a9a" stroke-width="1.8"/>
<path d="M263 596H269.2" stroke="#9a9a9a" stroke-width="1.8"/>
<path d="M263 652H269.2" stroke="#9a9a9a" stroke-width="1.8"/>
<path d="M263 708H269.2" stroke="#9a9a9a" stroke-width="1.8"/>
<path d="M269.2 708V714" stroke="#9a9a9a" stroke-width="1.8"/>
<text x="269.2" y="729.5" font-size="14.0" fill="#e4e4e4" text-anchor="middle">0</text>
<path d="M311.3 708V714" stroke="#9a9a9a" stroke-width="1.8"/>
<text x="311.3" y="729.5" font-size="14.0" fill="#e4e4e4" text-anchor="middle">2</text>
<path d="M353.5 708V714" stroke="#9a9a9a" stroke-width="1.8"/>
<text x="353.5" y="729.5" font-size="14.0" fill="#e4e4e4" text-anchor="middle">4</text>
<path d="M395.6 708V714" stroke="#9a9a9a" stroke-width="1.8"/>
<text x="395.6" y="729.5" font-size="14.0" fill="#e4e4e4" text-anchor="middle">6</text>
<path d="M437.8 708V714" stroke="#9a9a9a" stroke-width="1.8"/>
<text x="437.8" y="729.5" font-size="14.0" fill="#e4e4e4" text-anchor="middle">8</text>
<path d="M479.9 708V714" stroke="#9a9a9a" stroke-width="1.8"/>
<text x="479.9" y="729.5" font-size="14.0" fill="#e4e4e4" text-anchor="middle">10</text>
<path d="M522.0 708V714" stroke="#9a9a9a" stroke-width="1.8"/>
<text x="522.0" y="729.5" font-size="14.0" fill="#e4e4e4" text-anchor="middle">12</text>
<path d="M564.2 708V714" stroke="#9a9a9a" stroke-width="1.8"/>
<text x="564.2" y="729.5" font-size="14.0" fill="#e4e4e4" text-anchor="middle">14</text>
<text x="268.4" y="349.0" font-size="14.0" fill="#e4e4e4" text-anchor="end">100%</text>
<text x="268.4" y="405.0" font-size="14.0" fill="#e4e4e4" text-anchor="end">80%</text>
<text x="268.4" y="461.0" font-size="14.0" fill="#e4e4e4" text-anchor="end">60%</text>
<text x="268.4" y="517.0" font-size="14.0" fill="#e4e4e4" text-anchor="end">40%</text>
<text x="268.4" y="573.0" font-size="14.0" fill="#e4e4e4" text-anchor="end">20%</text>
<text x="268.4" y="629.0" font-size="14.0" fill="#e4e4e4" text-anchor="end">100</text>
<text x="268.4" y="685.0" font-size="14.0" fill="#e4e4e4" text-anchor="end">0</text>
<rect x="269.2" y="321.8" width="19.6" height="5.6" fill="#000"/>
<rect x="269.8" y="322.8" width="17.8" height="3.6" fill="#cd1010"/>
<rect x="269.8" y="322.8" width="17.8" height="3.6" fill="url(#gBarH)"/>
<rect x="269.2" y="328.6" width="18.3" height="5.6" fill="#000"/>
<rect x="269.8" y="329.6" width="16.5" height="3.6" fill="#10cd10"/>
<rect x="269.8" y="329.6" width="16.5" height="3.6" fill="url(#gBarH)"/>
<rect x="269.2" y="335.4" width="21.5" height="5.6" fill="#000"/>
<rect x="269.8" y="336.4" width="19.7" height="3.6" fill="#1010cd"/>
<rect x="269.8" y="336.4" width="19.7" height="3.6" fill="url(#gBarH)"/>
<rect x="269.2" y="342.2" width="40.7" height="5.6" fill="#000"/>
<rect x="269.8" y="343.2" width="38.9" height="3.6" fill="#10cdcd"/>
<rect x="269.8" y="343.2" width="38.9" height="3.6" fill="url(#gBarH)"/>
<rect x="269.2" y="349.0" width="27.8" height="5.6" fill="#000"/>
<rect x="269.8" y="350.0" width="26.0" height="3.6" fill="#cd10cd"/>
<rect x="269.8" y="350.0" width="26.0" height="3.6" fill="url(#gBarH)"/>
<rect x="269.2" y="355.8" width="46.6" height="5.6" fill="#000"/>
<rect x="269.8" y="356.8" width="44.8" height="3.6" fill="#cdcd10"/>
<rect x="269.8" y="356.8" width="44.8" height="3.6" fill="url(#gBarH)"/>
<rect x="269.2" y="377.8" width="19.4" height="5.6" fill="#000"/>
<rect x="269.8" y="378.8" width="17.6" height="3.6" fill="#cd4040"/>
<rect x="269.8" y="378.8" width="17.6" height="3.6" fill="url(#gBarH)"/>
<rect x="269.2" y="384.6" width="31.0" height="5.6" fill="#000"/>
<rect x="269.8" y="385.6" width="29.2" height="3.6" fill="#40cd40"/>
<rect x="269.8" y="385.6" width="29.2" height="3.6" fill="url(#gBarH)"/>
<rect x="269.2" y="391.4" width="29.7" height="5.6" fill="#000"/>
<rect x="269.8" y="392.4" width="27.9" height="3.6" fill="#4040cd"/>
<rect x="269.8" y="392.4" width="27.9" height="3.6" fill="url(#gBarH)"/>
<rect x="269.2" y="398.2" width="42.4" height="5.6" fill="#000"/>
<rect x="269.8" y="399.2" width="40.6" height="3.6" fill="#40cdcd"/>
<rect x="269.8" y="399.2" width="40.6" height="3.6" fill="url(#gBarH)"/>
<rect x="269.2" y="405.0" width="34.6" height="5.6" fill="#000"/>
<rect x="269.8" y="406.0" width="32.8" height="3.6" fill="#cd40cd"/>
<rect x="269.8" y="406.0" width="32.8" height="3.6" fill="url(#gBarH)"/>
<rect x="269.2" y="411.8" width="57.7" height="5.6" fill="#000"/>
<rect x="269.8" y="412.8" width="55.9" height="3.6" fill="#cdcd40"/>
<rect x="269.8" y="412.8" width="55.9" height="3.6" fill="url(#gBarH)"/>
<rect x="269.2" y="433.8" width="18.3" height="5.6" fill="#000"/>
<rect x="269.8" y="434.8" width="16.5" height="3.6" fill="#cd6262"/>
<rect x="269.8" y="434.8" width="16.5" height="3.6" fill="url(#gBarH)"/>
<rect x="269.2" y="440.6" width="43.0" height="5.6" fill="#000"/>
<rect x="269.8" y="441.6" width="41.2" height="3.6" fill="#62cd62"/>
<rect x="269.8" y="441.6" width="41.2" height="3.6" fill="url(#gBarH)"/>
<rect x="269.2" y="447.4" width="46.1" height="5.6" fill="#000"/>
<rect x="269.8" y="448.4" width="44.3" height="3.6" fill="#6262cd"/>
<rect x="269.8" y="448.4" width="44.3" height="3.6" fill="url(#gBarH)"/>
<rect x="269.2" y="454.2" width="44.2" height="5.6" fill="#000"/>
<rect x="269.8" y="455.2" width="42.4" height="3.6" fill="#62cdcd"/>
<rect x="269.8" y="455.2" width="42.4" height="3.6" fill="url(#gBarH)"/>
<rect x="269.2" y="461.0" width="41.9" height="5.6" fill="#000"/>
<rect x="269.8" y="462.0" width="40.1" height="3.6" fill="#cd62cd"/>
<rect x="269.8" y="462.0" width="40.1" height="3.6" fill="url(#gBarH)"/>
<rect x="269.2" y="467.8" width="57.3" height="5.6" fill="#000"/>
<rect x="269.8" y="468.8" width="55.5" height="3.6" fill="#cdcd62"/>
<rect x="269.8" y="468.8" width="55.5" height="3.6" fill="url(#gBarH)"/>
<rect x="269.2" y="489.8" width="23.6" height="5.6" fill="#000"/>
<rect x="269.8" y="490.8" width="21.8" height="3.6" fill="#cd8484"/>
<rect x="269.8" y="490.8" width="21.8" height="3.6" fill="url(#gBarH)"/>
<rect x="269.2" y="496.6" width="52.7" height="5.6" fill="#000"/>
<rect x="269.8" y="497.6" width="50.9" height="3.6" fill="#84cd84"/>
<rect x="269.8" y="497.6" width="50.9" height="3.6" fill="url(#gBarH)"/>
<rect x="269.2" y="503.4" width="62.8" height="5.6" fill="#000"/>
<rect x="269.8" y="504.4" width="61.0" height="3.6" fill="#8484cd"/>
<rect x="269.8" y="504.4" width="61.0" height="3.6" fill="url(#gBarH)"/>
<rect x="269.2" y="510.2" width="45.9" height="5.6" fill="#000"/>
<rect x="269.8" y="511.2" width="44.1" height="3.6" fill="#84cdcd"/>
<rect x="269.8" y="511.2" width="44.1" height="3.6" fill="url(#gBarH)"/>
<rect x="269.2" y="517.0" width="57.3" height="5.6" fill="#000"/>
<rect x="269.8" y="518.0" width="55.5" height="3.6" fill="#cd84cd"/>
<rect x="269.8" y="518.0" width="55.5" height="3.6" fill="url(#gBarH)"/>
<rect x="269.2" y="523.8" width="65.3" height="5.6" fill="#000"/>
<rect x="269.8" y="524.8" width="63.5" height="3.6" fill="#cdcd84"/>
<rect x="269.8" y="524.8" width="63.5" height="3.6" fill="url(#gBarH)"/>
<rect x="269.2" y="545.8" width="33.3" height="5.6" fill="#000"/>
<rect x="269.8" y="546.8" width="31.5" height="3.6" fill="#cda6a6"/>
<rect x="269.8" y="546.8" width="31.5" height="3.6" fill="url(#gBarH)"/>
<rect x="269.2" y="552.6" width="62.8" height="5.6" fill="#000"/>
<rect x="269.8" y="553.6" width="61.0" height="3.6" fill="#a6cda6"/>
<rect x="269.8" y="553.6" width="61.0" height="3.6" fill="url(#gBarH)"/>
<rect x="269.2" y="559.4" width="86.4" height="5.6" fill="#000"/>
<rect x="269.8" y="560.4" width="84.6" height="3.6" fill="#a6a6cd"/>
<rect x="269.8" y="560.4" width="84.6" height="3.6" fill="url(#gBarH)"/>
<rect x="269.2" y="566.2" width="63.8" height="5.6" fill="#000"/>
<rect x="269.8" y="567.2" width="62.0" height="3.6" fill="#a6cdcd"/>
<rect x="269.8" y="567.2" width="62.0" height="3.6" fill="url(#gBarH)"/>
<rect x="269.2" y="573.0" width="67.2" height="5.6" fill="#000"/>
<rect x="269.8" y="574.0" width="65.4" height="3.6" fill="#cda6cd"/>
<rect x="269.8" y="574.0" width="65.4" height="3.6" fill="url(#gBarH)"/>
<rect x="269.2" y="579.8" width="91.7" height="5.6" fill="#000"/>
<rect x="269.8" y="580.8" width="89.9" height="3.6" fill="#cdcda6"/>
<rect x="269.8" y="580.8" width="89.9" height="3.6" fill="url(#gBarH)"/>
<rect x="269.2" y="643.2" width="130.6" height="5.8" fill="#000"/>
<rect x="269.8" y="644.5" width="128.8" height="3.2" fill="url(#gWhiteBar)"/>
<rect x="269.2" y="698.2" width="19.0" height="6" fill="#050505"/>
<rect x="269.8" y="699.8" width="16.8" height="2.8" fill="#1a1a1a"/>
<rect x="639.8" y="261.2" width="147.29999999999995" height="286.8" fill="#222222"/>
<text x="699.8" y="255.7" font-size="14.2" fill="#e4e4e4" text-anchor="middle">Delta L</text>
<path d="M633.8 261.2H787.0999999999999" stroke="#9a9a9a" stroke-width="1.8"/>
<text x="633.5" y="267.6" font-size="14.2" fill="#e4e4e4" text-anchor="end">15</text>
<path d="M633.8 309.2H787.0999999999999" stroke="#8c8c8c" stroke-width="1.5"/>
<text x="633.5" y="315.6" font-size="14.2" fill="#e4e4e4" text-anchor="end">10</text>
<path d="M633.8 357.6H787.0999999999999" stroke="#8c8c8c" stroke-width="1.5"/>
<text x="633.5" y="364.0" font-size="14.2" fill="#e4e4e4" text-anchor="end">5</text>
<path d="M633.8 405.8H787.0999999999999" stroke="#8c8c8c" stroke-width="1.5"/>
<text x="633.5" y="412.2" font-size="14.2" fill="#e4e4e4" text-anchor="end">0</text>
<path d="M633.8 453.2H787.0999999999999" stroke="#8c8c8c" stroke-width="1.5"/>
<text x="633.5" y="459.6" font-size="14.2" fill="#e4e4e4" text-anchor="end">-5</text>
<path d="M633.8 500.6H787.0999999999999" stroke="#8c8c8c" stroke-width="1.5"/>
<text x="633.5" y="507.0" font-size="14.2" fill="#e4e4e4" text-anchor="end">-10</text>
<path d="M633.8 548.0H787.0999999999999" stroke="#9a9a9a" stroke-width="1.8"/>
<text x="633.5" y="554.4" font-size="14.2" fill="#e4e4e4" text-anchor="end">-15</text>
<path d="M639.8 260.7V555M787.0999999999999 260.7V555" stroke="#9a9a9a" stroke-width="1.8"/>
<text x="712.8" y="563.3" font-size="13.8" fill="#e4e4e4" text-anchor="middle">100%</text>
<path d="M654.0 404.2H771.8" stroke="#000" stroke-width="1.3"/>
<rect x="839.8" y="261.2" width="147.29999999999995" height="286.8" fill="#222222"/>
<text x="899.8" y="255.7" font-size="14.2" fill="#e4e4e4" text-anchor="middle">Delta C</text>
<path d="M833.8 261.2H987.0999999999999" stroke="#9a9a9a" stroke-width="1.8"/>
<text x="833.5" y="267.6" font-size="14.2" fill="#e4e4e4" text-anchor="end">15</text>
<path d="M833.8 309.2H987.0999999999999" stroke="#8c8c8c" stroke-width="1.5"/>
<text x="833.5" y="315.6" font-size="14.2" fill="#e4e4e4" text-anchor="end">10</text>
<path d="M833.8 357.6H987.0999999999999" stroke="#8c8c8c" stroke-width="1.5"/>
<text x="833.5" y="364.0" font-size="14.2" fill="#e4e4e4" text-anchor="end">5</text>
<path d="M833.8 405.8H987.0999999999999" stroke="#8c8c8c" stroke-width="1.5"/>
<text x="833.5" y="412.2" font-size="14.2" fill="#e4e4e4" text-anchor="end">0</text>
<path d="M833.8 453.2H987.0999999999999" stroke="#8c8c8c" stroke-width="1.5"/>
<text x="833.5" y="459.6" font-size="14.2" fill="#e4e4e4" text-anchor="end">-5</text>
<path d="M833.8 500.6H987.0999999999999" stroke="#8c8c8c" stroke-width="1.5"/>
<text x="833.5" y="507.0" font-size="14.2" fill="#e4e4e4" text-anchor="end">-10</text>
<path d="M833.8 548.0H987.0999999999999" stroke="#9a9a9a" stroke-width="1.8"/>
<text x="833.5" y="554.4" font-size="14.2" fill="#e4e4e4" text-anchor="end">-15</text>
<path d="M839.8 260.7V555M987.0999999999999 260.7V555" stroke="#9a9a9a" stroke-width="1.8"/>
<text x="912.8" y="563.3" font-size="13.8" fill="#e4e4e4" text-anchor="middle">100%</text>
<rect x="855.5999999999999" y="405.8" width="116.2" height="19.1" fill="#000"/>
<rect x="857.0" y="407.2" width="113.4" height="16.3" fill="url(#gYBar)"/>
<rect x="1039.9" y="261.2" width="147.29999999999995" height="286.8" fill="#222222"/>
<text x="1099.9" y="255.7" font-size="14.2" fill="#e4e4e4" text-anchor="middle">Delta H</text>
<path d="M1033.9 261.2H1187.2" stroke="#9a9a9a" stroke-width="1.8"/>
<text x="1033.6" y="267.6" font-size="14.2" fill="#e4e4e4" text-anchor="end">15</text>
<path d="M1033.9 309.2H1187.2" stroke="#8c8c8c" stroke-width="1.5"/>
<text x="1033.6" y="315.6" font-size="14.2" fill="#e4e4e4" text-anchor="end">10</text>
<path d="M1033.9 357.6H1187.2" stroke="#8c8c8c" stroke-width="1.5"/>
<text x="1033.6" y="364.0" font-size="14.2" fill="#e4e4e4" text-anchor="end">5</text>
<path d="M1033.9 405.8H1187.2" stroke="#8c8c8c" stroke-width="1.5"/>
<text x="1033.6" y="412.2" font-size="14.2" fill="#e4e4e4" text-anchor="end">0</text>
<path d="M1033.9 453.2H1187.2" stroke="#8c8c8c" stroke-width="1.5"/>
<text x="1033.6" y="459.6" font-size="14.2" fill="#e4e4e4" text-anchor="end">-5</text>
<path d="M1033.9 500.6H1187.2" stroke="#8c8c8c" stroke-width="1.5"/>
<text x="1033.6" y="507.0" font-size="14.2" fill="#e4e4e4" text-anchor="end">-10</text>
<path d="M1033.9 548.0H1187.2" stroke="#9a9a9a" stroke-width="1.8"/>
<text x="1033.6" y="554.4" font-size="14.2" fill="#e4e4e4" text-anchor="end">-15</text>
<path d="M1039.9 260.7V555M1187.2 260.7V555" stroke="#9a9a9a" stroke-width="1.8"/>
<text x="1112.9" y="563.3" font-size="13.8" fill="#e4e4e4" text-anchor="middle">100%</text>
<rect x="1055.7" y="360.2" width="116.2" height="45.6" fill="#000"/>
<rect x="1057.1000000000001" y="361.6" width="113.4" height="42.8" fill="url(#gYBar)"/>
<rect x="605.8" y="574.5" width="601.2" height="165" fill="#000000"/>
<text transform="translate(620 610) rotate(-90)" font-size="12" fill="#f0f0f0" text-anchor="middle" textLength="36" lengthAdjust="spacingAndGlyphs">Actual</text>
<text transform="translate(620 686.5) rotate(-90)" font-size="12" fill="#f0f0f0" text-anchor="middle" textLength="36" lengthAdjust="spacingAndGlyphs">Target</text>
<rect x="627.4" y="581.3" width="100.8" height="67.7" fill="#b9c2a8"/>
<rect x="627.4" y="649" width="100.8" height="66.3" fill="#bfc19b"/>
<rect x="627.4" y="581.3" width="100.8" height="134" fill="none" stroke="#e8e8e8" stroke-width="1"/>
<text x="677.8" y="731.5" font-size="12.5" fill="#f4f4f4" text-anchor="middle">20%</text>
<rect x="744.9" y="581.3" width="100.8" height="67.7" fill="#bac486"/>
<rect x="744.9" y="649" width="100.8" height="66.3" fill="#c1c282"/>
<rect x="744.9" y="581.3" width="100.8" height="134" fill="none" stroke="#e8e8e8" stroke-width="1"/>
<text x="795.3" y="731.5" font-size="12.5" fill="#f4f4f4" text-anchor="middle">40%</text>
<rect x="862.4" y="581.3" width="100.8" height="67.7" fill="#bec66a"/>
<rect x="862.4" y="649" width="100.8" height="66.3" fill="#c4c364"/>
<rect x="862.4" y="581.3" width="100.8" height="134" fill="none" stroke="#e8e8e8" stroke-width="1"/>
<text x="912.8" y="731.5" font-size="12.5" fill="#f4f4f4" text-anchor="middle">60%</text>
<rect x="979.9" y="581.3" width="100.8" height="67.7" fill="#bcc03c"/>
<rect x="979.9" y="649" width="100.8" height="66.3" fill="#c2be2e"/>
<rect x="979.9" y="581.3" width="100.8" height="134" fill="none" stroke="#e8e8e8" stroke-width="1"/>
<text x="1030.3" y="731.5" font-size="12.5" fill="#f4f4f4" text-anchor="middle">80%</text>
<rect x="1097.4" y="581.3" width="100.8" height="67.7" fill="#c0c81a"/>
<rect x="1097.4" y="649" width="100.8" height="66.3" fill="#c8c600"/>
<rect x="1097.4" y="581.3" width="100.8" height="134" fill="none" stroke="#e8e8e8" stroke-width="1"/>
<text x="1147.8" y="731.5" font-size="12.5" fill="#f4f4f4" text-anchor="middle">100%</text>
<text x="277.0" y="785.6" font-size="27.8" fill="#f2f2f2" textLength="236.3" lengthAdjust="spacingAndGlyphs">Avg dE2000: 2.28</text>
<text x="272.8" y="826.6" font-size="27.8" fill="#f2f2f2" textLength="244.8" lengthAdjust="spacingAndGlyphs">Max dE2000: 6.19</text>
<text x="240.7" y="875.8" font-size="27.5" fill="#f2f2f2" textLength="221.3" lengthAdjust="spacingAndGlyphs">Current Reading</text>
<text x="240.7" y="911.7" font-size="25.0" fill="#f2f2f2" textLength="103.3" lengthAdjust="spacingAndGlyphs">x: 0.4278</text>
<text x="399.3" y="911.7" font-size="25.0" fill="#f2f2f2" textLength="104.0" lengthAdjust="spacingAndGlyphs">y: 0.5411</text>
<text x="240.7" y="952.3" font-size="25.0" fill="#f2f2f2" textLength="96.6" lengthAdjust="spacingAndGlyphs">fL: 68.25</text>
<text x="240.7" y="987.3" font-size="25.0" fill="#f2f2f2" textLength="161.0" lengthAdjust="spacingAndGlyphs">cd/m²: 233.83</text>
<text x="699.0" y="787.7" font-size="14.0" fill="#e4e4e4" text-anchor="middle">RGB Balance</text>
<rect x="587.7" y="792.7" width="254.0" height="183.29999999999995" fill="#222222"/>
<path d="M581.7 812H841.7" stroke="#8c8c8c" stroke-width="1.5"/>
<text x="581.5" y="817.0" font-size="13.6" fill="#e4e4e4" text-anchor="end">104</text>
<path d="M581.7 849H841.7" stroke="#8c8c8c" stroke-width="1.5"/>
<text x="581.5" y="854.0" font-size="13.6" fill="#e4e4e4" text-anchor="end">102</text>
<path d="M581.7 885.3H841.7" stroke="#8c8c8c" stroke-width="1.5"/>
<text x="581.5" y="890.3" font-size="13.6" fill="#e4e4e4" text-anchor="end">100</text>
<path d="M581.7 922.3H841.7" stroke="#8c8c8c" stroke-width="1.5"/>
<text x="581.5" y="927.3" font-size="13.6" fill="#e4e4e4" text-anchor="end">98</text>
<path d="M581.7 958.7H841.7" stroke="#8c8c8c" stroke-width="1.5"/>
<text x="581.5" y="963.7" font-size="13.6" fill="#e4e4e4" text-anchor="end">96</text>
<path d="M587.7 792.7H841.7" stroke="#9a9a9a" stroke-width="1.8"/>
<path d="M587.7 792.7V983M841.7 792.7V983M587.7 976H841.7" stroke="#9a9a9a" stroke-width="1.8"/>
<rect x="613.5" y="921.9000000000001" width="64.8" height="54.1" fill="url(#gRb)" stroke="#000" stroke-width="1.4"/>
<rect x="679.7" y="872.3000000000001" width="66.6" height="103.7" fill="url(#gGb)" stroke="#000" stroke-width="1.4"/>
<rect x="747.7" y="827.9000000000001" width="66.2" height="148.1" fill="url(#gBb)" stroke="#000" stroke-width="1.4"/>
<text x="715.0" y="992.3" font-size="13.6" fill="#e4e4e4" text-anchor="middle">100%</text>
<rect x="1214.4" y="187.7" width="701.6" height="565.6" fill="#1c1c1c"/>
<rect x="1221" y="193.8" width="691.5" height="553" fill="#333333"/>
<text x="1524.0" y="212.8" font-size="14.5" fill="#e4e4e4" textLength="85.4" lengthAdjust="spacingAndGlyphs">CIE 1976 u'v'</text>
<rect x="1259.3" y="219" width="648" height="499" fill="#222222"/>
<g clip-path="url(#cpPlot)"><g clip-path="url(#cpLocus)">
<g filter="url(#fBlur)"><rect x="1272" y="224" width="132" height="6.6" fill="url(#o0)"/><rect x="1263" y="230" width="196" height="6.6" fill="url(#o1)"/><rect x="1259" y="236" width="252" height="6.6" fill="url(#o2)"/><rect x="1256" y="242" width="308" height="6.6" fill="url(#o3)"/><rect x="1255" y="248" width="356" height="6.6" fill="url(#o4)"/><rect x="1254" y="254" width="412" height="6.6" fill="url(#o5)"/><rect x="1254" y="260" width="468" height="6.6" fill="url(#o6)"/><rect x="1254" y="266" width="520" height="6.6" fill="url(#o7)"/><rect x="1254" y="272" width="572" height="6.6" fill="url(#o8)"/><rect x="1254" y="278" width="624" height="6.6" fill="url(#o9)"/><rect x="1255" y="284" width="672" height="6.6" fill="url(#o10)"/><rect x="1256" y="290" width="672" height="6.6" fill="url(#o11)"/><rect x="1257" y="296" width="672" height="6.6" fill="url(#o12)"/><rect x="1258" y="302" width="668" height="6.6" fill="url(#o13)"/><rect x="1259" y="308" width="668" height="6.6" fill="url(#o14)"/><rect x="1260" y="314" width="668" height="6.6" fill="url(#o15)"/><rect x="1262" y="320" width="660" height="6.6" fill="url(#o16)"/><rect x="1264" y="326" width="656" height="6.6" fill="url(#o17)"/><rect x="1266" y="332" width="648" height="6.6" fill="url(#o18)"/><rect x="1267" y="338" width="640" height="6.6" fill="url(#o19)"/><rect x="1270" y="344" width="632" height="6.6" fill="url(#o20)"/><rect x="1272" y="350" width="624" height="6.6" fill="url(#o21)"/><rect x="1273" y="356" width="616" height="6.6" fill="url(#o22)"/><rect x="1275" y="362" width="608" height="6.6" fill="url(#o23)"/><rect x="1278" y="368" width="600" height="6.6" fill="url(#o24)"/><rect x="1280" y="374" width="592" height="6.6" fill="url(#o25)"/><rect x="1283" y="380" width="584" height="6.6" fill="url(#o26)"/><rect x="1285" y="386" width="576" height="6.6" fill="url(#o27)"/><rect x="1288" y="392" width="564" height="6.6" fill="url(#o28)"/><rect x="1290" y="398" width="560" height="6.6" fill="url(#o29)"/><rect x="1293" y="404" width="548" height="6.6" fill="url(#o30)"/><rect x="1296" y="410" width="540" height="6.6" fill="url(#o31)"/><rect x="1299" y="416" width="532" height="6.6" fill="url(#o32)"/><rect x="1301" y="422" width="524" height="6.6" fill="url(#o33)"/><rect x="1304" y="428" width="516" height="6.6" fill="url(#o34)"/><rect x="1307" y="434" width="508" height="6.6" fill="url(#o35)"/><rect x="1310" y="440" width="496" height="6.6" fill="url(#o36)"/><rect x="1313" y="446" width="488" height="6.6" fill="url(#o37)"/><rect x="1316" y="452" width="480" height="6.6" fill="url(#o38)"/><rect x="1319" y="458" width="472" height="6.6" fill="url(#o39)"/><rect x="1323" y="464" width="460" height="6.6" fill="url(#o40)"/><rect x="1326" y="470" width="452" height="6.6" fill="url(#o41)"/><rect x="1329" y="476" width="444" height="6.6" fill="url(#o42)"/><rect x="1333" y="482" width="432" height="6.6" fill="url(#o43)"/><rect x="1336" y="488" width="424" height="6.6" fill="url(#o44)"/><rect x="1340" y="494" width="416" height="6.6" fill="url(#o45)"/><rect x="1343" y="500" width="404" height="6.6" fill="url(#o46)"/><rect x="1347" y="506" width="396" height="6.6" fill="url(#o47)"/><rect x="1350" y="512" width="388" height="6.6" fill="url(#o48)"/><rect x="1354" y="518" width="376" height="6.6" fill="url(#o49)"/><rect x="1358" y="524" width="368" height="6.6" fill="url(#o50)"/><rect x="1362" y="530" width="356" height="6.6" fill="url(#o51)"/><rect x="1365" y="536" width="348" height="6.6" fill="url(#o52)"/><rect x="1369" y="542" width="340" height="6.6" fill="url(#o53)"/><rect x="1373" y="548" width="328" height="6.6" fill="url(#o54)"/><rect x="1377" y="554" width="320" height="6.6" fill="url(#o55)"/><rect x="1381" y="560" width="308" height="6.6" fill="url(#o56)"/><rect x="1385" y="566" width="300" height="6.6" fill="url(#o57)"/><rect x="1389" y="572" width="288" height="6.6" fill="url(#o58)"/><rect x="1394" y="578" width="280" height="6.6" fill="url(#o59)"/><rect x="1397" y="584" width="272" height="6.6" fill="url(#o60)"/><rect x="1402" y="590" width="260" height="6.6" fill="url(#o61)"/><rect x="1407" y="596" width="248" height="6.6" fill="url(#o62)"/><rect x="1411" y="602" width="240" height="6.6" fill="url(#o63)"/><rect x="1416" y="608" width="228" height="6.6" fill="url(#o64)"/><rect x="1421" y="614" width="216" height="6.6" fill="url(#o65)"/><rect x="1426" y="620" width="208" height="6.6" fill="url(#o66)"/><rect x="1431" y="626" width="196" height="6.6" fill="url(#o67)"/><rect x="1437" y="632" width="184" height="6.6" fill="url(#o68)"/><rect x="1443" y="638" width="172" height="6.6" fill="url(#o69)"/><rect x="1448" y="644" width="160" height="6.6" fill="url(#o70)"/><rect x="1455" y="650" width="148" height="6.6" fill="url(#o71)"/><rect x="1461" y="656" width="136" height="6.6" fill="url(#o72)"/><rect x="1467" y="662" width="124" height="6.6" fill="url(#o73)"/><rect x="1474" y="668" width="112" height="6.6" fill="url(#o74)"/><rect x="1482" y="674" width="96" height="6.6" fill="url(#o75)"/><rect x="1488" y="680" width="84" height="6.6" fill="url(#o76)"/><rect x="1496" y="686" width="72" height="6.6" fill="url(#o77)"/><rect x="1504" y="692" width="60" height="6.6" fill="url(#o78)"/><rect x="1510" y="698" width="48" height="6.6" fill="url(#o79)"/><rect x="1518" y="704" width="32" height="6.6" fill="url(#o80)"/></g>
<g clip-path="url(#cpTri)"><g filter="url(#fBlur)"><rect x="1360" y="232" width="42" height="4.6" fill="url(#n0)"/><rect x="1360" y="236" width="81" height="4.6" fill="url(#n1)"/><rect x="1360" y="240" width="120" height="4.6" fill="url(#n2)"/><rect x="1360" y="244" width="159" height="4.6" fill="url(#n3)"/><rect x="1361" y="248" width="198" height="4.6" fill="url(#n4)"/><rect x="1362" y="252" width="234" height="4.6" fill="url(#n5)"/><rect x="1363" y="256" width="273" height="4.6" fill="url(#n6)"/><rect x="1364" y="260" width="312" height="4.6" fill="url(#n7)"/><rect x="1365" y="264" width="348" height="4.6" fill="url(#n8)"/><rect x="1366" y="268" width="387" height="4.6" fill="url(#n9)"/><rect x="1367" y="272" width="426" height="4.6" fill="url(#n10)"/><rect x="1368" y="276" width="435" height="4.6" fill="url(#n11)"/><rect x="1369" y="280" width="432" height="4.6" fill="url(#n12)"/><rect x="1370" y="284" width="432" height="4.6" fill="url(#n13)"/><rect x="1371" y="288" width="429" height="4.6" fill="url(#n14)"/><rect x="1372" y="292" width="423" height="4.6" fill="url(#n15)"/><rect x="1373" y="296" width="417" height="4.6" fill="url(#n16)"/><rect x="1374" y="300" width="411" height="4.6" fill="url(#n17)"/><rect x="1375" y="304" width="408" height="4.6" fill="url(#n18)"/><rect x="1376" y="308" width="402" height="4.6" fill="url(#n19)"/><rect x="1377" y="312" width="396" height="4.6" fill="url(#n20)"/><rect x="1378" y="316" width="390" height="4.6" fill="url(#n21)"/><rect x="1379" y="320" width="384" height="4.6" fill="url(#n22)"/><rect x="1380" y="324" width="378" height="4.6" fill="url(#n23)"/><rect x="1380" y="328" width="375" height="4.6" fill="url(#n24)"/><rect x="1381" y="332" width="369" height="4.6" fill="url(#n25)"/><rect x="1382" y="336" width="363" height="4.6" fill="url(#n26)"/><rect x="1383" y="340" width="357" height="4.6" fill="url(#n27)"/><rect x="1384" y="344" width="351" height="4.6" fill="url(#n28)"/><rect x="1385" y="348" width="345" height="4.6" fill="url(#n29)"/><rect x="1386" y="352" width="342" height="4.6" fill="url(#n30)"/><rect x="1387" y="356" width="336" height="4.6" fill="url(#n31)"/><rect x="1388" y="360" width="330" height="4.6" fill="url(#n32)"/><rect x="1389" y="364" width="324" height="4.6" fill="url(#n33)"/><rect x="1390" y="368" width="318" height="4.6" fill="url(#n34)"/><rect x="1391" y="372" width="312" height="4.6" fill="url(#n35)"/><rect x="1392" y="376" width="309" height="4.6" fill="url(#n36)"/><rect x="1393" y="380" width="303" height="4.6" fill="url(#n37)"/><rect x="1394" y="384" width="297" height="4.6" fill="url(#n38)"/><rect x="1395" y="388" width="291" height="4.6" fill="url(#n39)"/><rect x="1396" y="392" width="285" height="4.6" fill="url(#n40)"/><rect x="1397" y="396" width="279" height="4.6" fill="url(#n41)"/><rect x="1398" y="400" width="273" height="4.6" fill="url(#n42)"/><rect x="1399" y="404" width="270" height="4.6" fill="url(#n43)"/><rect x="1399" y="408" width="264" height="4.6" fill="url(#n44)"/><rect x="1400" y="412" width="258" height="4.6" fill="url(#n45)"/><rect x="1401" y="416" width="252" height="4.6" fill="url(#n46)"/><rect x="1402" y="420" width="249" height="4.6" fill="url(#n47)"/><rect x="1403" y="424" width="243" height="4.6" fill="url(#n48)"/><rect x="1404" y="428" width="237" height="4.6" fill="url(#n49)"/><rect x="1405" y="432" width="231" height="4.6" fill="url(#n50)"/><rect x="1406" y="436" width="225" height="4.6" fill="url(#n51)"/><rect x="1407" y="440" width="219" height="4.6" fill="url(#n52)"/><rect x="1408" y="444" width="213" height="4.6" fill="url(#n53)"/><rect x="1409" y="448" width="210" height="4.6" fill="url(#n54)"/><rect x="1410" y="452" width="204" height="4.6" fill="url(#n55)"/><rect x="1411" y="456" width="198" height="4.6" fill="url(#n56)"/><rect x="1412" y="460" width="192" height="4.6" fill="url(#n57)"/><rect x="1413" y="464" width="186" height="4.6" fill="url(#n58)"/><rect x="1414" y="468" width="180" height="4.6" fill="url(#n59)"/><rect x="1415" y="472" width="174" height="4.6" fill="url(#n60)"/><rect x="1416" y="476" width="171" height="4.6" fill="url(#n61)"/><rect x="1417" y="480" width="165" height="4.6" fill="url(#n62)"/><rect x="1418" y="484" width="159" height="4.6" fill="url(#n63)"/><rect x="1419" y="488" width="153" height="4.6" fill="url(#n64)"/><rect x="1419" y="492" width="150" height="4.6" fill="url(#n65)"/><rect x="1420" y="496" width="144" height="4.6" fill="url(#n66)"/><rect x="1421" y="500" width="138" height="4.6" fill="url(#n67)"/><rect x="1422" y="504" width="132" height="4.6" fill="url(#n68)"/><rect x="1423" y="508" width="126" height="4.6" fill="url(#n69)"/><rect x="1424" y="512" width="120" height="4.6" fill="url(#n70)"/><rect x="1425" y="516" width="114" height="4.6" fill="url(#n71)"/><rect x="1426" y="520" width="111" height="4.6" fill="url(#n72)"/><rect x="1427" y="524" width="105" height="4.6" fill="url(#n73)"/><rect x="1428" y="528" width="99" height="4.6" fill="url(#n74)"/><rect x="1429" y="532" width="93" height="4.6" fill="url(#n75)"/><rect x="1430" y="536" width="87" height="4.6" fill="url(#n76)"/><rect x="1431" y="540" width="81" height="4.6" fill="url(#n77)"/><rect x="1432" y="544" width="75" height="4.6" fill="url(#n78)"/><rect x="1433" y="548" width="72" height="4.6" fill="url(#n79)"/><rect x="1434" y="552" width="66" height="4.6" fill="url(#n80)"/><rect x="1435" y="556" width="60" height="4.6" fill="url(#n81)"/><rect x="1436" y="560" width="54" height="4.6" fill="url(#n82)"/><rect x="1437" y="564" width="48" height="4.6" fill="url(#n83)"/><rect x="1438" y="568" width="42" height="4.6" fill="url(#n84)"/><rect x="1438" y="572" width="39" height="4.6" fill="url(#n85)"/><rect x="1439" y="576" width="33" height="4.6" fill="url(#n86)"/><rect x="1440" y="580" width="27" height="4.6" fill="url(#n87)"/><rect x="1441" y="584" width="21" height="4.6" fill="url(#n88)"/><rect x="1442" y="588" width="15" height="4.6" fill="url(#n89)"/></g></g>
</g></g>
<path d="M1259.3 218.5H1908.5V718.5" fill="none" stroke="#9c9c9c" stroke-width="1.8"/>
<path d="M1259.3 218V718H1908.5" fill="none" stroke="#9c9c9c" stroke-width="1.8"/>
<path d="M1253 718.0H1259.3" stroke="#9c9c9c" stroke-width="1.6"/>
<text x="1252.5" y="723.0" font-size="14.0" fill="#e4e4e4" text-anchor="end">0</text>
<path d="M1253 676.5H1259.3" stroke="#9c9c9c" stroke-width="1.6"/>
<text x="1252.5" y="681.5" font-size="14.0" fill="#e4e4e4" text-anchor="end">0.05</text>
<path d="M1253 634.9H1259.3" stroke="#9c9c9c" stroke-width="1.6"/>
<text x="1252.5" y="639.9" font-size="14.0" fill="#e4e4e4" text-anchor="end">0.1</text>
<path d="M1253 593.4H1259.3" stroke="#9c9c9c" stroke-width="1.6"/>
<text x="1252.5" y="598.4" font-size="14.0" fill="#e4e4e4" text-anchor="end">0.15</text>
<path d="M1253 551.8H1259.3" stroke="#9c9c9c" stroke-width="1.6"/>
<text x="1252.5" y="556.8" font-size="14.0" fill="#e4e4e4" text-anchor="end">0.2</text>
<path d="M1253 510.2H1259.3" stroke="#9c9c9c" stroke-width="1.6"/>
<text x="1252.5" y="515.2" font-size="14.0" fill="#e4e4e4" text-anchor="end">0.25</text>
<path d="M1253 468.7H1259.3" stroke="#9c9c9c" stroke-width="1.6"/>
<text x="1252.5" y="473.7" font-size="14.0" fill="#e4e4e4" text-anchor="end">0.3</text>
<path d="M1253 427.1H1259.3" stroke="#9c9c9c" stroke-width="1.6"/>
<text x="1252.5" y="432.1" font-size="14.0" fill="#e4e4e4" text-anchor="end">0.35</text>
<path d="M1253 385.6H1259.3" stroke="#9c9c9c" stroke-width="1.6"/>
<text x="1252.5" y="390.6" font-size="14.0" fill="#e4e4e4" text-anchor="end">0.4</text>
<path d="M1253 344.1H1259.3" stroke="#9c9c9c" stroke-width="1.6"/>
<text x="1252.5" y="349.1" font-size="14.0" fill="#e4e4e4" text-anchor="end">0.45</text>
<path d="M1253 302.5H1259.3" stroke="#9c9c9c" stroke-width="1.6"/>
<text x="1252.5" y="307.5" font-size="14.0" fill="#e4e4e4" text-anchor="end">0.5</text>
<path d="M1253 260.9H1259.3" stroke="#9c9c9c" stroke-width="1.6"/>
<text x="1252.5" y="265.9" font-size="14.0" fill="#e4e4e4" text-anchor="end">0.55</text>
<path d="M1259.3 718V724" stroke="#9c9c9c" stroke-width="1.6"/>
<text x="1259.3" y="739.3" font-size="14.0" fill="#e4e4e4" text-anchor="middle">0</text>
<path d="M1313.3 718V724" stroke="#9c9c9c" stroke-width="1.6"/>
<text x="1313.3" y="739.3" font-size="14.0" fill="#e4e4e4" text-anchor="middle">0.05</text>
<path d="M1367.3 718V724" stroke="#9c9c9c" stroke-width="1.6"/>
<text x="1367.3" y="739.3" font-size="14.0" fill="#e4e4e4" text-anchor="middle">0.1</text>
<path d="M1421.3 718V724" stroke="#9c9c9c" stroke-width="1.6"/>
<text x="1421.3" y="739.3" font-size="14.0" fill="#e4e4e4" text-anchor="middle">0.15</text>
<path d="M1475.3 718V724" stroke="#9c9c9c" stroke-width="1.6"/>
<text x="1475.3" y="739.3" font-size="14.0" fill="#e4e4e4" text-anchor="middle">0.2</text>
<path d="M1529.3 718V724" stroke="#9c9c9c" stroke-width="1.6"/>
<text x="1529.3" y="739.3" font-size="14.0" fill="#e4e4e4" text-anchor="middle">0.25</text>
<path d="M1583.3 718V724" stroke="#9c9c9c" stroke-width="1.6"/>
<text x="1583.3" y="739.3" font-size="14.0" fill="#e4e4e4" text-anchor="middle">0.3</text>
<path d="M1637.3 718V724" stroke="#9c9c9c" stroke-width="1.6"/>
<text x="1637.3" y="739.3" font-size="14.0" fill="#e4e4e4" text-anchor="middle">0.35</text>
<path d="M1691.3 718V724" stroke="#9c9c9c" stroke-width="1.6"/>
<text x="1691.3" y="739.3" font-size="14.0" fill="#e4e4e4" text-anchor="middle">0.4</text>
<path d="M1745.3 718V724" stroke="#9c9c9c" stroke-width="1.6"/>
<text x="1745.3" y="739.3" font-size="14.0" fill="#e4e4e4" text-anchor="middle">0.45</text>
<path d="M1799.3 718V724" stroke="#9c9c9c" stroke-width="1.6"/>
<text x="1799.3" y="739.3" font-size="14.0" fill="#e4e4e4" text-anchor="middle">0.5</text>
<path d="M1853.3 718V724" stroke="#9c9c9c" stroke-width="1.6"/>
<text x="1853.3" y="739.3" font-size="14.0" fill="#e4e4e4" text-anchor="middle">0.55</text>
<rect x="1358.3" y="228.8" width="14.4" height="14.4" fill="none" stroke="#ffffff" stroke-width="1.4"/>
<rect x="1372.8" y="239.3" width="14.4" height="14.4" fill="none" stroke="#ffffff" stroke-width="1.4"/>
<rect x="1387.8" y="253.2" width="14.4" height="14.4" fill="none" stroke="#ffffff" stroke-width="1.4"/>
<rect x="1408.3" y="271.5" width="14.4" height="14.4" fill="none" stroke="#ffffff" stroke-width="1.4"/>
<rect x="1433.2" y="291.9" width="14.4" height="14.4" fill="none" stroke="#ffffff" stroke-width="1.4"/>
<rect x="1473.0" y="239.3" width="14.4" height="14.4" fill="none" stroke="#ffffff" stroke-width="1.4"/>
<rect x="1471.7" y="252.9" width="14.4" height="14.4" fill="none" stroke="#ffffff" stroke-width="1.4"/>
<rect x="1470.4" y="267.3" width="14.4" height="14.4" fill="none" stroke="#ffffff" stroke-width="1.4"/>
<rect x="1469.1" y="282.0" width="14.4" height="14.4" fill="none" stroke="#ffffff" stroke-width="1.4"/>
<rect x="1467.8" y="299.0" width="14.4" height="14.4" fill="none" stroke="#ffffff" stroke-width="1.4"/>
<rect x="1381.9" y="332.2" width="14.4" height="14.4" fill="none" stroke="#ffffff" stroke-width="1.4"/>
<rect x="1398.4" y="329.1" width="14.4" height="14.4" fill="none" stroke="#ffffff" stroke-width="1.4"/>
<rect x="1415.4" y="325.7" width="14.4" height="14.4" fill="none" stroke="#ffffff" stroke-width="1.4"/>
<rect x="1431.9" y="324.9" width="14.4" height="14.4" fill="none" stroke="#ffffff" stroke-width="1.4"/>
<rect x="1448.7" y="322.3" width="14.4" height="14.4" fill="none" stroke="#ffffff" stroke-width="1.4"/>
<rect x="1461.8" y="349.9" width="14.4" height="14.4" fill="none" stroke="#ffffff" stroke-width="1.4"/>
<rect x="1459.4" y="388.4" width="14.4" height="14.4" fill="none" stroke="#ffffff" stroke-width="1.4"/>
<rect x="1454.8" y="436.0" width="14.4" height="14.4" fill="none" stroke="#ffffff" stroke-width="1.4"/>
<rect x="1448.2" y="498.2" width="14.4" height="14.4" fill="none" stroke="#ffffff" stroke-width="1.4"/>
<rect x="1441.7" y="577.7" width="14.4" height="14.4" fill="none" stroke="#ffffff" stroke-width="1.4"/>
<rect x="1484.2" y="334.8" width="14.4" height="14.4" fill="none" stroke="#ffffff" stroke-width="1.4"/>
<rect x="1505.6" y="354.0" width="14.4" height="14.4" fill="none" stroke="#ffffff" stroke-width="1.4"/>
<rect x="1533.8" y="377.8" width="14.4" height="14.4" fill="none" stroke="#ffffff" stroke-width="1.4"/>
<rect x="1564.1" y="404.1" width="14.4" height="14.4" fill="none" stroke="#ffffff" stroke-width="1.4"/>
<rect x="1602.6" y="436.0" width="14.4" height="14.4" fill="none" stroke="#ffffff" stroke-width="1.4"/>
<rect x="1520.6" y="311.0" width="14.4" height="14.4" fill="none" stroke="#ffffff" stroke-width="1.4"/>
<rect x="1580.8" y="302.8" width="14.4" height="14.4" fill="none" stroke="#ffffff" stroke-width="1.4"/>
<rect x="1649.7" y="291.7" width="14.4" height="14.4" fill="none" stroke="#ffffff" stroke-width="1.4"/>
<rect x="1716.0" y="281.6" width="14.4" height="14.4" fill="none" stroke="#ffffff" stroke-width="1.4"/>
<rect x="1788.3" y="270.5" width="14.4" height="14.4" fill="none" stroke="#ffffff" stroke-width="1.4"/>
<rect x="1465.6" y="320.2" width="14" height="14" fill="none" stroke="#000" stroke-width="2.4"/>
<circle cx="1363.2" cy="237.3" r="4.3" fill="#10b010" stroke="#1e1e1e" stroke-width="1.2"/>
<circle cx="1379.4" cy="250.7" r="4.3" fill="#40b840" stroke="#1e1e1e" stroke-width="1.2"/>
<circle cx="1397.7" cy="267.4" r="4.3" fill="#60bc60" stroke="#1e1e1e" stroke-width="1.2"/>
<circle cx="1416.9" cy="285.2" r="4.3" fill="#80bc80" stroke="#1e1e1e" stroke-width="1.2"/>
<circle cx="1438.8" cy="306.2" r="4.3" fill="#a0c0a0" stroke="#1e1e1e" stroke-width="1.2"/>
<circle cx="1473.4" cy="246.6" r="4.3" fill="#c8c000" stroke="#1e1e1e" stroke-width="1.2"/>
<circle cx="1472.3" cy="262" r="4.3" fill="#b8b050" stroke="#1e1e1e" stroke-width="1.2"/>
<circle cx="1471" cy="275.3" r="4.3" fill="#b8b068" stroke="#1e1e1e" stroke-width="1.2"/>
<circle cx="1469.7" cy="292.3" r="4.3" fill="#b8b488" stroke="#1e1e1e" stroke-width="1.2"/>
<circle cx="1468" cy="310" r="4.3" fill="#c0bc9c" stroke="#1e1e1e" stroke-width="1.2"/>
<circle cx="1387.5" cy="344.7" r="4.3" fill="#10c0c0" stroke="#1e1e1e" stroke-width="1.2"/>
<circle cx="1402.7" cy="342" r="4.3" fill="#40b8b8" stroke="#1e1e1e" stroke-width="1.2"/>
<circle cx="1418.7" cy="339.2" r="4.3" fill="#60b4b4" stroke="#1e1e1e" stroke-width="1.2"/>
<circle cx="1435.2" cy="336.5" r="4.3" fill="#80b4b4" stroke="#1e1e1e" stroke-width="1.2"/>
<circle cx="1450.4" cy="333.9" r="4.3" fill="#a0b8b8" stroke="#1e1e1e" stroke-width="1.2"/>
<circle cx="1463" cy="363.7" r="4.3" fill="#a0a0c0" stroke="#1e1e1e" stroke-width="1.2"/>
<circle cx="1459.5" cy="406.2" r="4.3" fill="#8888c0" stroke="#1e1e1e" stroke-width="1.2"/>
<circle cx="1454.9" cy="453.8" r="4.3" fill="#6868c0" stroke="#1e1e1e" stroke-width="1.2"/>
<circle cx="1449.9" cy="516" r="4.3" fill="#4848c0" stroke="#1e1e1e" stroke-width="1.2"/>
<circle cx="1443.3" cy="595" r="4.3" fill="#2020c0" stroke="#1e1e1e" stroke-width="1.2"/>
<circle cx="1485.8" cy="348.5" r="4.3" fill="#c0a0b8" stroke="#1e1e1e" stroke-width="1.2"/>
<circle cx="1509.1" cy="369.8" r="4.3" fill="#c088c0" stroke="#1e1e1e" stroke-width="1.2"/>
<circle cx="1531.9" cy="390" r="4.3" fill="#c068c0" stroke="#1e1e1e" stroke-width="1.2"/>
<circle cx="1561.7" cy="417.9" r="4.3" fill="#c048c0" stroke="#1e1e1e" stroke-width="1.2"/>
<circle cx="1597.6" cy="449.7" r="4.3" fill="#c020c0" stroke="#1e1e1e" stroke-width="1.2"/>
<circle cx="1523.8" cy="321.2" r="4.3" fill="#b89090" stroke="#1e1e1e" stroke-width="1.2"/>
<circle cx="1588" cy="310" r="4.3" fill="#b07070" stroke="#1e1e1e" stroke-width="1.2"/>
<circle cx="1647.7" cy="299.4" r="4.3" fill="#b85858" stroke="#1e1e1e" stroke-width="1.2"/>
<circle cx="1713.5" cy="288.3" r="4.3" fill="#c04040" stroke="#1e1e1e" stroke-width="1.2"/>
<circle cx="1779.3" cy="278.2" r="4.3" fill="#c81818" stroke="#1e1e1e" stroke-width="1.2"/>
<circle cx="1466.6" cy="332.4" r="4.6" fill="#fff" stroke="#333" stroke-width="1"/>
<circle cx="1410.3" cy="378.2" r="4.8" fill="#000"/>
<rect x="1684.2" y="560.6" width="220.7" height="150.8" fill="#333333"/>
<rect x="1687.3" y="563.7" width="214.7" height="144.9" fill="#222" stroke="#9a9a9a" stroke-width="1.8"/>
<path d="M1688.2 571.8L1901.1 699.6V707.7H1688.2Z" fill="url(#gInB)"/>
<path d="M1688.2 564.6H1793.8L1901.1 636V699.6L1688.2 571.8Z" fill="url(#gInD)"/>
<circle cx="1751" cy="620.6" r="4.5" fill="#c8c000" stroke="#2a2a2a" stroke-width="1.3"/>
<rect x="1787.5" y="629" width="13.4" height="13.4" fill="none" stroke="#fff" stroke-width="1.5"/>
<rect x="862.5" y="761" width="1049.5" height="240.8" fill="none" stroke="#d8d8d8" stroke-width="1.3" stroke-dasharray="1.6 2.4"/>
<rect x="864.2" y="763.7" width="737.8" height="26.3" fill="url(#gHdr)"/>
<rect x="864.2" y="790.00" width="737.8" height="26.3" fill="#3e3e3e"/>
<text x="882.0" y="809.1" font-size="16.2" fill="#f2f2f2" font-weight="bold" textLength="87.5" lengthAdjust="spacingAndGlyphs">x: CIE31</text>
<text x="1067.8" y="809.1" font-size="15.6" fill="#ececec" textLength="68.5" lengthAdjust="spacingAndGlyphs">0.3246</text>
<text x="1175.6" y="809.1" font-size="15.6" fill="#ececec" textLength="68.5" lengthAdjust="spacingAndGlyphs">0.3497</text>
<text x="1283.4" y="809.1" font-size="15.6" fill="#ececec" textLength="68.5" lengthAdjust="spacingAndGlyphs">0.3749</text>
<text x="1391.2" y="809.1" font-size="15.6" fill="#ececec" textLength="68.5" lengthAdjust="spacingAndGlyphs">0.3992</text>
<text x="1499.0" y="809.1" font-size="15.6" fill="#ececec" textLength="68.5" lengthAdjust="spacingAndGlyphs">0.4278</text>
<rect x="864.2" y="816.25" width="737.8" height="26.3" fill="#7f7f7f"/>
<text x="882.0" y="835.5" font-size="16.2" fill="#f2f2f2" font-weight="bold" textLength="87.5" lengthAdjust="spacingAndGlyphs">y: CIE31</text>
<text x="1067.8" y="835.5" font-size="15.6" fill="#ececec" textLength="68.5" lengthAdjust="spacingAndGlyphs">0.3637</text>
<text x="1175.6" y="835.5" font-size="15.6" fill="#ececec" textLength="68.5" lengthAdjust="spacingAndGlyphs">0.4066</text>
<text x="1283.4" y="835.5" font-size="15.6" fill="#ececec" textLength="68.5" lengthAdjust="spacingAndGlyphs">0.4497</text>
<text x="1391.2" y="835.5" font-size="15.6" fill="#ececec" textLength="68.5" lengthAdjust="spacingAndGlyphs">0.4914</text>
<text x="1499.0" y="835.5" font-size="15.6" fill="#ececec" textLength="68.5" lengthAdjust="spacingAndGlyphs">0.5411</text>
<rect x="864.2" y="842.50" width="737.8" height="26.3" fill="#3e3e3e"/>
<text x="882.0" y="861.8" font-size="16.2" fill="#f2f2f2" font-weight="bold" textLength="13.6" lengthAdjust="spacingAndGlyphs">Y</text>
<text x="1067.8" y="861.8" font-size="15.6" fill="#ececec" textLength="94.0" lengthAdjust="spacingAndGlyphs">248.5540</text>
<text x="1175.6" y="861.8" font-size="15.6" fill="#ececec" textLength="94.0" lengthAdjust="spacingAndGlyphs">243.8802</text>
<text x="1283.4" y="861.8" font-size="15.6" fill="#ececec" textLength="94.0" lengthAdjust="spacingAndGlyphs">240.2670</text>
<text x="1391.2" y="861.8" font-size="15.6" fill="#ececec" textLength="94.0" lengthAdjust="spacingAndGlyphs">237.3243</text>
<text x="1499.0" y="861.8" font-size="15.6" fill="#ececec" textLength="94.0" lengthAdjust="spacingAndGlyphs">233.8262</text>
<rect x="864.2" y="868.75" width="737.8" height="26.3" fill="#7f7f7f"/>
<text x="882.0" y="888.2" font-size="16.2" fill="#f2f2f2" font-weight="bold" textLength="158.3" lengthAdjust="spacingAndGlyphs">Target x:CIE31</text>
<text x="1067.8" y="888.2" font-size="15.6" fill="#ececec" textLength="68.5" lengthAdjust="spacingAndGlyphs">0.3384</text>
<text x="1175.6" y="888.2" font-size="15.6" fill="#ececec" textLength="68.5" lengthAdjust="spacingAndGlyphs">0.3619</text>
<text x="1283.4" y="888.2" font-size="15.6" fill="#ececec" textLength="68.5" lengthAdjust="spacingAndGlyphs">0.3869</text>
<text x="1391.2" y="888.2" font-size="15.6" fill="#ececec" textLength="68.5" lengthAdjust="spacingAndGlyphs">0.4128</text>
<text x="1499.0" y="888.2" font-size="15.6" fill="#ececec" textLength="68.5" lengthAdjust="spacingAndGlyphs">0.4378</text>
<rect x="864.2" y="895.00" width="737.8" height="26.3" fill="#3e3e3e"/>
<text x="882.0" y="914.5" font-size="16.2" fill="#f2f2f2" font-weight="bold" textLength="157.5" lengthAdjust="spacingAndGlyphs">Target y:CIE31</text>
<text x="1067.8" y="914.5" font-size="15.6" fill="#ececec" textLength="68.5" lengthAdjust="spacingAndGlyphs">0.3714</text>
<text x="1175.6" y="914.5" font-size="15.6" fill="#ececec" textLength="68.5" lengthAdjust="spacingAndGlyphs">0.4103</text>
<text x="1283.4" y="914.5" font-size="15.6" fill="#ececec" textLength="68.5" lengthAdjust="spacingAndGlyphs">0.4517</text>
<text x="1391.2" y="914.5" font-size="15.6" fill="#ececec" textLength="68.5" lengthAdjust="spacingAndGlyphs">0.4944</text>
<text x="1499.0" y="914.5" font-size="15.6" fill="#ececec" textLength="68.5" lengthAdjust="spacingAndGlyphs">0.5359</text>
<rect x="864.2" y="921.25" width="737.8" height="26.3" fill="#7f7f7f"/>
<text x="882.0" y="940.9" font-size="16.2" fill="#f2f2f2" font-weight="bold" textLength="91.7" lengthAdjust="spacingAndGlyphs">Target Y</text>
<text x="1067.8" y="940.9" font-size="15.6" fill="#ececec" textLength="94.0" lengthAdjust="spacingAndGlyphs">246.8095</text>
<text x="1175.6" y="940.9" font-size="15.6" fill="#ececec" textLength="94.0" lengthAdjust="spacingAndGlyphs">242.3875</text>
<text x="1283.4" y="940.9" font-size="15.6" fill="#ececec" textLength="94.0" lengthAdjust="spacingAndGlyphs">238.6471</text>
<text x="1391.2" y="940.9" font-size="15.6" fill="#ececec" textLength="94.0" lengthAdjust="spacingAndGlyphs">235.5335</text>
<text x="1499.0" y="940.9" font-size="15.6" fill="#ececec" textLength="94.0" lengthAdjust="spacingAndGlyphs">233.0441</text>
<rect x="864.2" y="947.50" width="737.8" height="26.3" fill="#3e3e3e"/>
<text x="882.0" y="967.2" font-size="16.2" fill="#f2f2f2" font-weight="bold" textLength="90.5" lengthAdjust="spacingAndGlyphs">ΔE 2000</text>
<text x="1067.8" y="967.2" font-size="15.6" fill="#ececec" textLength="68.5" lengthAdjust="spacingAndGlyphs">4.3709</text>
<text x="1175.6" y="967.2" font-size="15.6" fill="#ececec" textLength="68.5" lengthAdjust="spacingAndGlyphs">3.0793</text>
<text x="1283.4" y="967.2" font-size="15.6" fill="#ececec" textLength="68.5" lengthAdjust="spacingAndGlyphs">2.7006</text>
<text x="1391.2" y="967.2" font-size="15.6" fill="#ececec" textLength="68.5" lengthAdjust="spacingAndGlyphs">2.7032</text>
<text x="1499.0" y="967.2" font-size="15.6" fill="#ececec" textLength="68.5" lengthAdjust="spacingAndGlyphs">2.1812</text>
<rect x="864.2" y="973.75" width="737.8" height="26.3" fill="#7f7f7f"/>
<text x="882.0" y="993.6" font-size="16.2" fill="#f2f2f2" font-weight="bold" textLength="72.2" lengthAdjust="spacingAndGlyphs">ΔE ITP</text>
<text x="1067.8" y="993.6" font-size="15.6" fill="#ececec" textLength="68.5" lengthAdjust="spacingAndGlyphs">7.8205</text>
<text x="1175.6" y="993.6" font-size="15.6" fill="#ececec" textLength="68.5" lengthAdjust="spacingAndGlyphs">6.8048</text>
<text x="1283.4" y="993.6" font-size="15.6" fill="#ececec" textLength="68.5" lengthAdjust="spacingAndGlyphs">6.7426</text>
<text x="1391.2" y="993.6" font-size="15.6" fill="#ececec" textLength="68.5" lengthAdjust="spacingAndGlyphs">8.4214</text>
<text x="1499.0" y="993.6" font-size="15.6" fill="#ececec" textLength="68.5" lengthAdjust="spacingAndGlyphs">5.9409</text>
<rect x="1601.3" y="763.7" width="1.8" height="236.3" fill="#0a0a0a"/>
<text x="1115.0" y="782.0" font-size="15.0" fill="#f4f4f4" font-weight="bold" text-anchor="middle" textLength="40.8" lengthAdjust="spacingAndGlyphs">20%</text>
<text x="1223.1" y="782.0" font-size="15.0" fill="#f4f4f4" font-weight="bold" text-anchor="middle" textLength="40.8" lengthAdjust="spacingAndGlyphs">40%</text>
<text x="1331.2" y="782.0" font-size="15.0" fill="#f4f4f4" font-weight="bold" text-anchor="middle" textLength="40.8" lengthAdjust="spacingAndGlyphs">60%</text>
<text x="1439.3" y="782.0" font-size="15.0" fill="#f4f4f4" font-weight="bold" text-anchor="middle" textLength="40.8" lengthAdjust="spacingAndGlyphs">80%</text>
<text x="1547.4" y="782.0" font-size="15.0" fill="#f4f4f4" font-weight="bold" text-anchor="middle" textLength="52.0" lengthAdjust="spacingAndGlyphs">100%</text>
<rect x="225" y="1076" width="1695" height="70" fill="#2a2a2a"/>
<rect x="1136" y="1076" width="421" height="70" fill="url(#gTB)"/>
<rect x="226.2" y="1076.2" width="50.8" height="69" rx="4" fill="url(#gSwB)"/>
<circle cx="251.5" cy="1087" r="8.4" fill="url(#gUpC)"/>
<path d="M246.8 1088.2H256.2L251.5 1083.2Z" fill="#2a2a2a"/>
<rect x="232" y="1105.3" width="39.4" height="34.2" rx="4" fill="#ffff00" stroke="#b0b000" stroke-width="0.8"/>
<rect x="283.5" y="1076" width="168.3" height="68" rx="5" fill="url(#gSwB)"/>
<rect x="289.3" y="1082" width="157.7" height="40.2" rx="4" fill="#c0c2a0" stroke="#7a7a6a" stroke-width="0.9"/>
<text x="368.0" y="1139.4" font-size="11.5" fill="#222" font-weight="bold" text-anchor="middle">20%</text>
<rect x="454.7" y="1076" width="168.3" height="68" rx="5" fill="url(#gSwB)"/>
<rect x="460.5" y="1082" width="157.7" height="40.2" rx="4" fill="#c2c282" stroke="#7a7a6a" stroke-width="0.9"/>
<text x="539.2" y="1139.4" font-size="11.5" fill="#222" font-weight="bold" text-anchor="middle">40%</text>
<rect x="625.9" y="1076" width="168.3" height="68" rx="5" fill="url(#gSwB)"/>
<rect x="631.7" y="1082" width="157.7" height="40.2" rx="4" fill="#c4c366" stroke="#7a7a6a" stroke-width="0.9"/>
<text x="710.4" y="1139.4" font-size="11.5" fill="#222" font-weight="bold" text-anchor="middle">60%</text>
<rect x="797.1" y="1076" width="168.3" height="68" rx="5" fill="url(#gSwB)"/>
<rect x="802.9" y="1082" width="157.7" height="40.2" rx="4" fill="#c3c048" stroke="#7a7a6a" stroke-width="0.9"/>
<text x="881.6" y="1139.4" font-size="11.5" fill="#222" font-weight="bold" text-anchor="middle">80%</text>
<rect x="968.3" y="1076.2" width="168" height="69.8" rx="5" fill="url(#gSwSel)"/>
<rect x="973.3" y="1081.6" width="158" height="40.9" rx="4" fill="#c3c000" stroke="#8a8800" stroke-width="0.8"/>
<text x="1052.3" y="1139.8" font-size="11.5" fill="#fafafa" font-weight="bold" text-anchor="middle">100%</text>
<rect x="1557" y="1076.1" width="53.4" height="69.9" rx="4" fill="url(#gStop)"/>
<rect x="1557" y="1096" width="53.4" height="1.6" fill="#5a5a5a"/>
<circle cx="1583.5" cy="1086" r="8" fill="url(#gUpC)"/>
<path d="M1579 1087.3H1588L1583.5 1082.5Z" fill="#2a2a2a"/>
<rect x="1567.5" y="1104.9" width="32.3" height="32.2" rx="4" fill="#b0b0b0" stroke="#2a2a2a" stroke-width="2.6"/>
<rect x="1576.2" y="1114" width="14.8" height="14.6" fill="#0a0a0a"/>
<rect x="1611.8" y="1076.1" width="305.2" height="34" rx="4" fill="url(#gNav)"/>
<rect x="1611.8" y="1111" width="305.2" height="35" rx="4" fill="url(#gNav)"/>
<rect x="1663.9" y="1076.1" width="1.4" height="34" fill="#505050"/>
<rect x="1714.4" y="1076.1" width="1.4" height="34" fill="#505050"/>
<rect x="1765.1" y="1076.1" width="1.4" height="34" fill="#505050"/>
<rect x="1816" y="1076.1" width="1.4" height="34" fill="#505050"/>
<rect x="1866.4" y="1076.1" width="1.4" height="34" fill="#505050"/>
<rect x="1765.2" y="1111" width="1.4" height="35" fill="#505050"/>
<circle cx="1638" cy="1093" r="9.5" fill="#7c7c7c" opacity="0.55"/>
<circle cx="1689" cy="1093" r="9.5" fill="#7c7c7c" opacity="0.55"/>
<circle cx="1740" cy="1093" r="9.5" fill="#7c7c7c" opacity="0.55"/>
<circle cx="1790.5" cy="1093" r="9.5" fill="#7c7c7c" opacity="0.55"/>
<circle cx="1841" cy="1093" r="9.5" fill="#7c7c7c" opacity="0.55"/>
<circle cx="1892" cy="1093" r="9.5" fill="#7c7c7c" opacity="0.55"/>
<text x="1677.0" y="1136.8" font-size="24.0" fill="#262626" textLength="60.0" lengthAdjust="spacingAndGlyphs" stroke="#262626" stroke-width="0.5">Back</text>
<text x="1797.3" y="1136.5" font-size="24.0" fill="#262626" textLength="57.7" lengthAdjust="spacingAndGlyphs" stroke="#262626" stroke-width="0.5">Next</text>
<circle cx="1887" cy="1128" r="10.5" fill="url(#gNavC)"/>
<path d="M1882.5 1123.5L1886.5 1128L1882.5 1132.5M1887.5 1123.5L1891.5 1128L1887.5 1132.5" fill="none" stroke="#333" stroke-width="1.6"/>
<rect x="1917" y="1076" width="3" height="70" fill="#151515"/>
<g>
<path d="M1631.3 1084.4L1668.8 1092L1669.9 1114.7L1640.7 1117.3M1631.3 1084.4L1633 1121.5L1656.3 1131.2L1697.7 1119.8L1673.9 1115.8" fill="none" stroke="#ffffff" stroke-opacity="0.55" stroke-width="4.6" stroke-linejoin="round" stroke-linecap="round"/>
<path d="M1631.3 1084.4L1668.8 1092L1669.9 1114.7L1640.7 1117.3M1631.3 1084.4L1633 1121.5L1656.3 1131.2L1697.7 1119.8L1673.9 1115.8" fill="none" stroke="#a3303c" stroke-opacity="0.82" stroke-width="2.6" stroke-linejoin="round" stroke-linecap="round"/>
<path d="M1642.7 1097.1C1647 1096 1650 1101 1654 1111.3L1673.6 1084.4" fill="none" stroke="#fff" stroke-opacity="0.6" stroke-width="5"/>
<path d="M1642.7 1097.1C1647 1096 1650 1101 1654 1111.3L1673.6 1084.4" fill="none" stroke="#363636" stroke-width="3"/>
<text x="1675.3" y="1112.3" font-size="24.5" font-weight="bold" fill="#a3303c" fill-opacity="0.82" stroke="#fff" stroke-opacity="0.6" stroke-width="1.4" paint-order="stroke" textLength="147.3" lengthAdjust="spacingAndGlyphs">NOTEBOOK</text>
<text x="1823" y="1112.3" font-size="24.5" fill="#3c3c3c" fill-opacity="0.85" stroke="#fff" stroke-opacity="0.6" stroke-width="1.4" paint-order="stroke" textLength="88.7" lengthAdjust="spacingAndGlyphs">CHECK</text>
</g>
<rect x="1913" y="64" width="7" height="1082" fill="url(#gRightEdge)"/>
</svg></body></html>
